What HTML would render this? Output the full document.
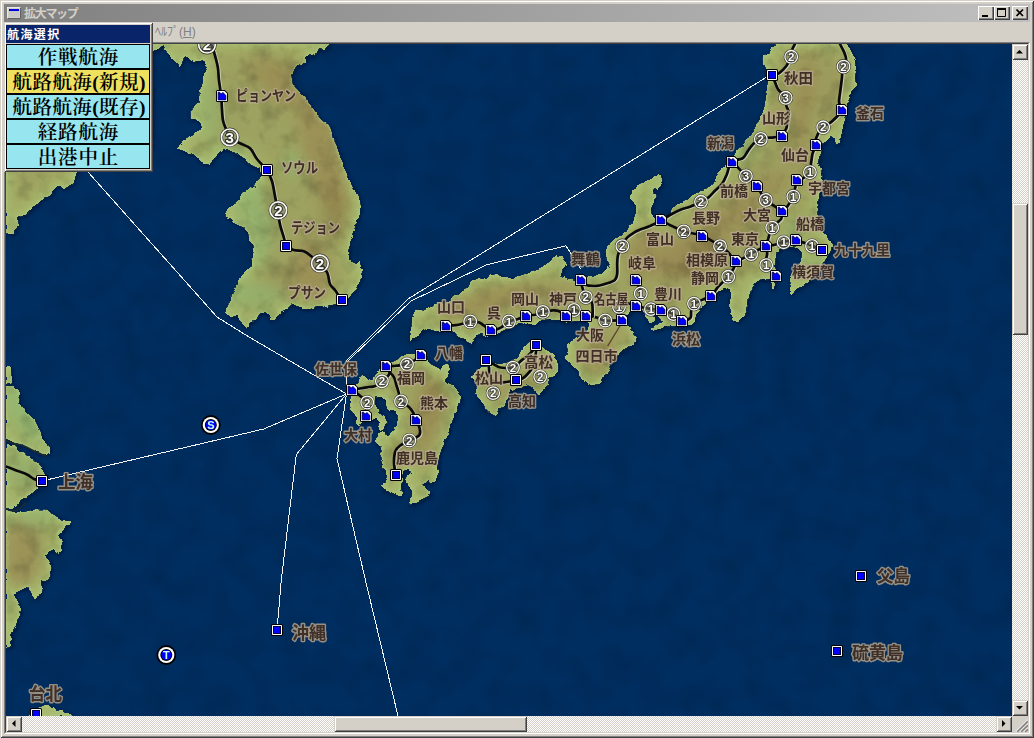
<!DOCTYPE html>
<html lang="ja">
<head>
<meta charset="utf-8">
<title>拡大マップ</title>
<style>
html,body{margin:0;padding:0;}
body{width:1034px;height:738px;overflow:hidden;background:#d4d0c8;position:relative;font-family:"Liberation Sans","Noto Sans CJK JP",sans-serif;}
.abs{position:absolute;}
#win{position:absolute;left:0;top:0;width:1034px;height:738px;box-sizing:border-box;background:#d4d0c8;
 box-shadow:inset 1px 1px 0 #d4d0c8, inset -1px -1px 0 #404040, inset 2px 2px 0 #fff, inset -2px -2px 0 #808080;}
#title{left:4px;top:4px;width:1026px;height:18px;background:linear-gradient(90deg,#808080 0%,#c0c0c0 100%);}
#title .txt{left:20px;top:1px;height:18px;line-height:18px;font-size:12px;font-weight:bold;color:#d4d0c8;letter-spacing:-1.3px;white-space:nowrap;}
.tb{position:absolute;top:6px;width:16px;height:14px;box-sizing:border-box;background:#d4d0c8;box-shadow:inset 1px 1px 0 #fff, inset -1px -1px 0 #404040, inset -2px -2px 0 #808080;}
#menubar{left:4px;top:22px;width:1026px;height:20px;background:#d4d0c8;}
#help{left:151px;top:2px;font-size:12px;line-height:16px;color:#808080;white-space:nowrap;letter-spacing:0px;}
#client{left:4px;top:42px;width:1026px;height:692px;box-sizing:border-box;border:1px solid;border-color:#808080 #fff #fff #808080;}
#client2{left:5px;top:43px;width:1024px;height:690px;box-sizing:border-box;border:1px solid;border-color:#404040 #d4d0c8 #d4d0c8 #404040;}
.track{background-color:#fff;background-image:linear-gradient(45deg,#d4d0c8 25%,transparent 25%,transparent 75%,#d4d0c8 75%),linear-gradient(45deg,#d4d0c8 25%,transparent 25%,transparent 75%,#d4d0c8 75%);background-size:2px 2px;background-position:0 0,1px 1px;}
.btn3d{position:absolute;box-sizing:border-box;background:#d4d0c8;box-shadow:inset 1px 1px 0 #d4d0c8, inset -1px -1px 0 #404040, inset 2px 2px 0 #fff, inset -2px -2px 0 #808080;}
#panel{left:4px;top:22px;width:149px;height:150px;box-sizing:border-box;background:#d4d0c8;box-shadow:inset 1px 1px 0 #d4d0c8, inset -1px -1px 0 #404040, inset 2px 2px 0 #fff, inset -2px -2px 0 #808080;}
#phead{left:2px;top:3px;width:144px;height:18px;background:#0a246a;color:#fff;font-weight:bold;font-size:12px;line-height:20px;letter-spacing:1.4px;white-space:nowrap;}
.pb{position:absolute;left:2px;width:144px;height:25px;box-sizing:border-box;border:1px solid #000;border-bottom-width:1px;background:#97e6ef;text-align:center;font-family:"Liberation Serif","Noto Serif CJK JP","Noto Serif CJK SC",serif;font-weight:600;font-size:19.5px;line-height:23px;color:#000;white-space:nowrap;overflow:hidden;}
.pb span{display:inline-block;letter-spacing:0.9px;margin-right:-0.9px;position:relative;top:1px;}
.pb span span{position:static;}
</style>
</head>
<body>
<div id="win">
 <div id="title" class="abs">
  <svg class="abs" style="left:3px;top:3px" width="14" height="12" viewBox="0 0 14 12"><rect x="0" y="0" width="14" height="12" fill="#d4d0c8"/><path d="M0 12V0H14" fill="none" stroke="#fff" stroke-width="1"/><path d="M0.5 11.5H13.5V0.5" fill="none" stroke="#606060" stroke-width="1"/><rect x="2" y="2" width="10" height="2" fill="#0000e0"/><rect x="2" y="4" width="10" height="6" fill="#c8c8c8"/></svg>
  <div class="abs txt">拡大マップ</div>
 </div>
 <div class="tb" style="left:978px"><svg width="16" height="14" class="abs" style="left:0;top:0"><rect x="4" y="9" width="6" height="2" fill="#000"/></svg></div>
 <div class="tb" style="left:994px"><svg width="16" height="14" class="abs" style="left:0;top:0"><path d="M3.5 3H11.5V10.5H3.5Z" fill="none" stroke="#000" stroke-width="1"/><rect x="3" y="2" width="9" height="2" fill="#000"/></svg></div>
 <div class="tb" style="left:1012px"><svg width="16" height="14" class="abs" style="left:0;top:0"><path d="M4.5 3.5L11 10M11 3.5L4.5 10" fill="none" stroke="#000" stroke-width="1.7"/></svg></div>
 <div id="menubar" class="abs"><div id="help" class="abs">ﾍﾙﾌﾟ(<u>H</u>)</div></div>
 <div id="client" class="abs"></div>
 <div id="client2" class="abs"></div>
 <div id="mapwrap" class="abs" style="left:6px;top:44px;width:1006px;height:672px;overflow:hidden;background:#01316a">
<svg width="1006" height="672" viewBox="6 44 1006 672" style="position:absolute;left:0;top:0;display:block">
<defs>
<filter id="noise" x="0" y="0" width="100%" height="100%"><feTurbulence type="fractalNoise" baseFrequency="0.035" numOctaves="2" seed="7" result="n"/><feColorMatrix in="n" type="matrix" values="0 0 0 0 0  0 0 0 0 0  0 0 0 0 0  0 0 0 -1.6 0.95"/></filter>
<filter id="noise2" x="0" y="0" width="100%" height="100%"><feTurbulence type="fractalNoise" baseFrequency="0.05" numOctaves="3" seed="3" result="n"/><feColorMatrix in="n" type="matrix" values="0 0 0 0 0  0 0 0 0 0  0 0 0 0 0  0 0 0 -2.2 1.2"/></filter>
<filter id="rough" x="0" y="0" width="100%" height="100%"><feTurbulence type="fractalNoise" baseFrequency="0.16" numOctaves="2" seed="11" result="t"/><feDisplacementMap in="SourceGraphic" in2="t" scale="4" xChannelSelector="R" yChannelSelector="G"/></filter>
<filter id="inner1" x="0" y="0" width="100%" height="100%"><feMorphology operator="erode" radius="3"/><feGaussianBlur stdDeviation="3"/></filter>
<filter id="inner2" x="0" y="0" width="100%" height="100%"><feMorphology operator="erode" radius="9"/><feGaussianBlur stdDeviation="6"/></filter>
<filter id="blur1" x="0" y="0" width="100%" height="100%"><feGaussianBlur stdDeviation="0.8"/></filter>
<filter id="blur8" x="-30%" y="-30%" width="160%" height="160%"><feGaussianBlur stdDeviation="7"/></filter>
<filter id="blur3" x="-30%" y="-30%" width="160%" height="160%"><feGaussianBlur stdDeviation="2.2"/></filter>
<filter id="sh" x="-10%" y="-10%" width="120%" height="120%"><feGaussianBlur stdDeviation="2"/></filter>
<clipPath id="landclip">
<polygon points="152.0,43.0 330.0,43.0 325.0,50.0 318.5,49.0 316.0,54.0 306.0,56.0 306.0,63.0 297.0,66.0 291.0,75.0 293.0,85.0 306.0,99.0 321.0,120.0 329.0,124.0 337.0,148.0 345.0,170.0 352.0,186.0 360.0,200.0 361.0,208.0 356.0,222.0 352.0,235.0 348.0,251.0 349.0,260.0 356.0,264.0 358.6,261.0 362.0,270.0 360.0,281.0 354.6,291.0 348.0,296.0 346.4,302.0 332.7,304.4 324.0,306.6 317.5,305.5 311.0,308.7 302.4,308.7 297.0,305.5 291.5,304.4 287.2,308.7 281.8,310.9 278.0,316.0 275.3,319.6 270.9,319.6 268.0,315.0 265.5,312.0 260.1,313.0 255.8,319.6 250.3,321.7 246.0,329.3 241.7,321.7 236.3,315.2 230.8,317.4 225.4,313.0 226.5,306.6 230.8,302.2 231.9,294.6 235.2,289.2 237.3,282.7 240.6,276.2 246.0,271.9 250.3,267.5 252.5,261.0 253.6,252.4 252.5,244.8 249.3,239.4 248.2,232.9 243.8,227.4 236.3,224.2 231.9,218.8 225.4,216.6 226.5,211.2 233.0,204.7 240.6,198.2 242.8,191.7 250.3,187.3 256.0,188.4 254.7,183.0 262.3,176.5 258.5,167.4 250.0,164.7 242.0,156.6 236.8,153.9 231.0,151.0 223.0,148.5 215.0,156.6 209.6,164.7 201.5,162.0 193.4,153.9 185.0,151.0 177.0,148.5 182.5,141.7 190.7,135.0 204.0,128.0 198.8,121.0 190.7,118.6 190.7,110.5 198.8,102.4 200.0,91.5 202.9,78.0 207.0,67.0 204.0,60.0 193.4,61.7 185.0,56.0 179.8,67.0 175.8,61.7 166.0,50.8 163.5,45.0 152.7,52.0"/>
<polygon points="6.0,43.0 152.0,43.0 152.0,150.0 82.0,150.0 78.0,168.0 76.5,173.0 73.0,183.0 65.0,188.5 57.0,185.8 51.5,194.0 40.7,200.7 32.5,207.5 27.0,214.0 16.0,217.0 19.0,225.0 13.5,233.0 6.0,234.5"/>
<polygon points="6.0,365.8 10.8,367.0 12.0,383.0 6.0,384.7"/>
<polygon points="6.0,386.0 13.5,386.0 20.0,393.0 19.0,402.0 27.0,413.0 35.0,421.0 40.7,432.0 42.0,440.0 50.0,447.0 50.0,452.5 46.0,455.0 35.0,451.0 24.4,445.7 16.0,443.0 6.0,440.0"/>
<polygon points="6.0,444.0 15.0,445.7 17.6,451.0 29.8,456.6 40.7,466.0 46.0,475.6 46.0,482.0 40.7,486.0 29.8,494.6 21.7,500.0 16.0,507.0 6.0,508.5"/>
<polygon points="6.0,510.0 13.5,512.0 24.4,512.0 35.0,509.5 46.0,509.5 54.0,515.0 62.0,520.0 71.0,521.7 65.0,528.5 58.0,535.0 62.0,542.0 62.0,550.0 58.0,554.0 54.0,549.0 48.8,551.5 44.7,555.6 48.8,559.6 51.5,567.8 50.0,577.0 44.7,581.0 40.7,581.0 42.0,589.5 35.0,600.0 31.0,592.0 27.0,586.8 21.7,589.5 13.5,593.5 20.0,605.7 19.0,616.6 15.0,627.0 10.8,635.6 10.8,646.0 6.0,648.0"/>
<polygon points="28.0,716.0 33.0,712.0 38.7,707.6 46.4,704.7 56.0,709.6 63.8,710.5 71.6,715.4 73.0,716.0"/>
<polygon points="350.0,392.0 352.4,386.2 356.8,384.7 359.8,383.2 359.0,378.8 362.0,375.0 365.8,377.3 368.8,380.3 373.2,379.5 375.5,375.0 377.7,372.0 380.7,369.0 386.4,363.0 392.6,362.0 397.0,360.0 401.6,355.7 407.5,354.2 413.5,354.0 421.2,352.0 425.4,359.0 431.4,364.6 437.3,367.6 440.3,369.8 443.3,366.0 447.8,364.6 450.0,369.0 447.8,375.8 444.5,380.3 447.8,383.2 453.8,385.5 456.7,390.7 461.2,395.9 459.7,402.6 456.7,410.0 453.8,417.5 451.7,422.0 450.3,426.8 447.6,433.6 444.9,440.3 442.2,447.1 439.5,453.9 438.1,460.7 436.8,467.4 438.1,474.2 435.4,481.0 431.3,483.7 427.3,481.0 423.2,483.7 425.9,489.1 430.7,491.2 428.6,495.9 423.2,498.6 417.8,501.3 411.0,504.7 410.3,501.3 411.7,495.9 412.4,490.5 409.6,486.4 406.9,482.4 404.9,478.3 408.3,475.6 411.0,472.9 409.6,468.8 402.9,471.5 402.0,476.0 402.2,481.0 400.8,487.8 402.2,494.6 397.4,495.2 390.7,491.8 383.9,489.8 380.5,485.0 385.2,482.4 388.0,478.3 385.2,471.5 382.5,464.7 380.5,458.0 381.9,451.2 380.5,446.4 376.4,443.0 375.8,437.6 379.1,433.6 383.9,430.8 386.0,436.0 389.6,435.4 393.4,431.0 397.0,425.0 397.8,417.5 396.3,411.6 391.0,409.0 389.6,411.6 386.6,407.0 386.0,400.0 381.4,396.7 374.7,397.4 374.7,404.0 379.2,410.0 379.2,413.0 384.4,416.0 386.6,422.0 385.2,428.0 380.7,431.0 377.7,428.0 379.2,423.5 377.7,419.0 373.2,418.3 371.7,420.5 366.0,422.0 362.0,421.3 359.8,425.7 356.1,423.5 357.6,419.0 354.6,414.5 350.9,410.0 350.1,402.6 350.9,396.7"/>
<polygon points="410.0,339.0 411.3,328.4 412.7,314.9 416.7,309.5 423.5,310.8 430.3,306.7 438.4,302.7 443.9,304.0 452.0,298.6 460.0,293.0 468.3,287.8 471.0,281.0 477.7,278.3 485.9,279.6 490.0,275.6 496.7,274.0 503.5,278.0 514.3,278.0 525.0,274.0 536.0,270.0 544.0,266.0 551.0,260.7 556.4,255.0 563.0,256.6 565.8,263.4 561.8,270.0 560.4,275.6 565.8,278.0 574.0,281.0 585.0,279.0 590.7,276.6 596.0,275.0 601.5,273.9 607.0,268.5 611.0,265.7 607.0,260.0 605.6,252.0 608.0,245.0 613.7,240.0 618.0,237.5 627.0,230.4 634.0,220.0 636.6,211.0 634.8,204.0 630.4,198.7 632.2,191.7 637.5,186.4 646.3,181.0 653.3,176.7 660.4,175.0 662.2,179.4 660.4,186.4 657.5,190.0 654.0,189.0 652.5,193.0 656.0,195.0 653.3,202.3 650.7,209.3 651.6,214.6 656.0,218.0 661.3,220.8 669.2,218.0 671.8,209.3 676.2,205.0 683.3,202.3 690.3,197.9 697.4,192.6 704.4,190.0 709.7,186.4 715.0,181.0 716.7,175.9 720.3,170.6 723.8,167.0 727.3,163.5 731.0,160.0 734.0,153.9 742.4,145.7 750.5,134.9 757.3,124.0 762.7,113.0 765.4,102.4 766.8,91.5 768.0,80.7 766.8,69.8 761.3,59.0 764.0,55.0 769.5,53.6 772.0,48.0 776.0,43.0 844.0,43.0 849.5,48.0 853.5,56.0 856.0,67.0 855.0,78.0 856.0,86.0 851.0,91.5 849.5,98.0 846.7,105.0 846.0,112.0 845.4,118.6 842.7,126.8 841.0,135.0 840.0,143.0 836.0,144.4 834.5,137.6 830.5,136.0 826.4,140.0 822.3,144.4 819.6,153.9 818.0,162.0 821.0,170.0 822.4,176.0 821.0,186.0 819.6,192.5 817.0,208.8 818.0,222.0 823.7,233.0 830.5,241.0 832.0,246.8 830.0,252.0 827.8,255.0 823.7,263.0 818.0,271.0 813.0,276.6 807.4,282.0 802.0,286.0 796.6,288.8 792.5,294.0 789.8,292.9 791.0,284.7 790.0,279.0 793.0,273.0 798.0,267.0 801.0,261.0 802.0,254.0 799.0,249.0 793.0,247.0 786.0,246.0 780.0,248.0 776.5,252.0 775.5,258.0 775.0,266.0 776.0,274.0 775.0,282.0 773.5,290.0 770.8,287.4 770.8,280.7 766.8,279.0 761.3,279.0 756.0,282.0 751.9,287.4 749.0,295.6 747.8,303.7 746.4,311.8 742.4,317.0 738.3,321.0 734.0,320.0 731.5,314.6 730.0,306.0 730.0,298.0 731.5,290.0 726.0,287.4 720.7,290.0 714.0,294.0 707.0,301.0 701.7,307.8 696.3,314.6 693.6,322.7 688.0,325.0 681.5,326.0 676.2,326.0 665.7,326.5 658.0,329.5 653.3,330.6 650.7,328.6 655.0,325.5 662.1,321.8 659.0,317.0 654.5,314.8 651.8,314.0 654.8,318.5 651.6,323.5 647.5,320.5 644.5,314.0 642.5,310.5 638.0,309.5 633.0,310.0 629.6,311.5 626.5,315.0 625.0,319.0 627.0,325.0 632.2,332.0 636.6,337.4 634.0,344.5 627.0,347.5 620.0,352.5 614.0,359.3 610.0,367.4 604.7,375.6 600.6,383.7 592.5,385.0 584.4,381.0 580.0,375.6 576.0,368.8 569.5,363.4 565.4,358.0 568.0,351.0 566.8,344.4 573.5,340.0 579.0,337.6 587.0,332.0 589.8,323.0 586.0,320.0 575.0,321.0 568.0,322.0 560.4,320.0 549.6,319.0 541.4,320.0 536.0,324.0 527.9,324.0 519.8,321.7 514.3,325.7 506.0,328.4 498.0,333.9 487.2,336.6 481.8,333.9 476.4,335.0 471.0,344.7 465.5,339.0 457.4,336.6 452.0,329.8 443.8,331.0 435.7,331.0 427.6,328.4 422.0,331.0 416.7,336.6 411.3,340.6"/>
<polygon points="481.3,367.4 489.5,366.0 494.9,363.4 503.0,364.7 508.5,362.0 516.6,359.3 520.7,353.9 523.4,347.0 530.0,343.0 535.6,341.7 542.4,347.0 547.8,351.0 554.6,355.0 557.3,362.0 558.6,370.0 554.6,375.6 549.0,378.0 547.8,385.0 542.4,391.8 538.3,396.0 534.0,387.8 527.4,385.0 519.3,387.8 511.0,390.5 508.5,397.0 504.4,405.0 499.0,409.5 495.0,416.0 489.5,413.5 484.0,408.0 481.3,401.0 477.3,397.0 476.0,390.5 478.6,383.7 474.6,379.6 470.5,377.0 476.0,373.0"/>
</clipPath>
<g id="mk"><rect x="-6" y="-6" width="12" height="12" rx="1.6" fill="#000"/><rect x="-5" y="-5" width="10" height="10" rx="0.8" fill="#fff"/><rect x="-3.5" y="-3.5" width="7" height="7" fill="#0000ff" stroke="#000040" stroke-width="1"/></g>
<g id="mp"><path d="M-6 -4.5Q-6 -6 -4.5 -6H2.8L6 -2.8V4.5Q6 6 4.5 6H-4.5Q-6 6 -6 4.5Z" fill="#000"/><path d="M-5 -5H2.4L5 -2.4V5H-5Z" fill="#fff"/><path d="M-3.8 -3.8H-2.4L-1.4 -2.2H-0.2L0.4 -3.2H1.2L3.8 -0.6V3.8H-3.8Z" fill="#0000ff" stroke="#000040" stroke-width="0.9" stroke-linejoin="round"/><path d="M-3.4 3.3H3.4" stroke="#0000b0" stroke-width="1"/></g>
</defs>
<rect x="6" y="44" width="1006" height="672" fill="#002e60"/>
<rect x="6" y="44" width="1006" height="672" fill="#001c40" filter="url(#noise)" opacity="0.15"/>
<g filter="url(#rough)">
<g transform="translate(1,1.5)" filter="url(#sh)" opacity="0.75">
<polygon points="152.0,43.0 330.0,43.0 325.0,50.0 318.5,49.0 316.0,54.0 306.0,56.0 306.0,63.0 297.0,66.0 291.0,75.0 293.0,85.0 306.0,99.0 321.0,120.0 329.0,124.0 337.0,148.0 345.0,170.0 352.0,186.0 360.0,200.0 361.0,208.0 356.0,222.0 352.0,235.0 348.0,251.0 349.0,260.0 356.0,264.0 358.6,261.0 362.0,270.0 360.0,281.0 354.6,291.0 348.0,296.0 346.4,302.0 332.7,304.4 324.0,306.6 317.5,305.5 311.0,308.7 302.4,308.7 297.0,305.5 291.5,304.4 287.2,308.7 281.8,310.9 278.0,316.0 275.3,319.6 270.9,319.6 268.0,315.0 265.5,312.0 260.1,313.0 255.8,319.6 250.3,321.7 246.0,329.3 241.7,321.7 236.3,315.2 230.8,317.4 225.4,313.0 226.5,306.6 230.8,302.2 231.9,294.6 235.2,289.2 237.3,282.7 240.6,276.2 246.0,271.9 250.3,267.5 252.5,261.0 253.6,252.4 252.5,244.8 249.3,239.4 248.2,232.9 243.8,227.4 236.3,224.2 231.9,218.8 225.4,216.6 226.5,211.2 233.0,204.7 240.6,198.2 242.8,191.7 250.3,187.3 256.0,188.4 254.7,183.0 262.3,176.5 258.5,167.4 250.0,164.7 242.0,156.6 236.8,153.9 231.0,151.0 223.0,148.5 215.0,156.6 209.6,164.7 201.5,162.0 193.4,153.9 185.0,151.0 177.0,148.5 182.5,141.7 190.7,135.0 204.0,128.0 198.8,121.0 190.7,118.6 190.7,110.5 198.8,102.4 200.0,91.5 202.9,78.0 207.0,67.0 204.0,60.0 193.4,61.7 185.0,56.0 179.8,67.0 175.8,61.7 166.0,50.8 163.5,45.0 152.7,52.0" fill="#000c28"/>
<polygon points="6.0,43.0 152.0,43.0 152.0,150.0 82.0,150.0 78.0,168.0 76.5,173.0 73.0,183.0 65.0,188.5 57.0,185.8 51.5,194.0 40.7,200.7 32.5,207.5 27.0,214.0 16.0,217.0 19.0,225.0 13.5,233.0 6.0,234.5" fill="#000c28"/>
<polygon points="6.0,365.8 10.8,367.0 12.0,383.0 6.0,384.7" fill="#000c28"/>
<polygon points="6.0,386.0 13.5,386.0 20.0,393.0 19.0,402.0 27.0,413.0 35.0,421.0 40.7,432.0 42.0,440.0 50.0,447.0 50.0,452.5 46.0,455.0 35.0,451.0 24.4,445.7 16.0,443.0 6.0,440.0" fill="#000c28"/>
<polygon points="6.0,444.0 15.0,445.7 17.6,451.0 29.8,456.6 40.7,466.0 46.0,475.6 46.0,482.0 40.7,486.0 29.8,494.6 21.7,500.0 16.0,507.0 6.0,508.5" fill="#000c28"/>
<polygon points="6.0,510.0 13.5,512.0 24.4,512.0 35.0,509.5 46.0,509.5 54.0,515.0 62.0,520.0 71.0,521.7 65.0,528.5 58.0,535.0 62.0,542.0 62.0,550.0 58.0,554.0 54.0,549.0 48.8,551.5 44.7,555.6 48.8,559.6 51.5,567.8 50.0,577.0 44.7,581.0 40.7,581.0 42.0,589.5 35.0,600.0 31.0,592.0 27.0,586.8 21.7,589.5 13.5,593.5 20.0,605.7 19.0,616.6 15.0,627.0 10.8,635.6 10.8,646.0 6.0,648.0" fill="#000c28"/>
<polygon points="28.0,716.0 33.0,712.0 38.7,707.6 46.4,704.7 56.0,709.6 63.8,710.5 71.6,715.4 73.0,716.0" fill="#000c28"/>
<polygon points="350.0,392.0 352.4,386.2 356.8,384.7 359.8,383.2 359.0,378.8 362.0,375.0 365.8,377.3 368.8,380.3 373.2,379.5 375.5,375.0 377.7,372.0 380.7,369.0 386.4,363.0 392.6,362.0 397.0,360.0 401.6,355.7 407.5,354.2 413.5,354.0 421.2,352.0 425.4,359.0 431.4,364.6 437.3,367.6 440.3,369.8 443.3,366.0 447.8,364.6 450.0,369.0 447.8,375.8 444.5,380.3 447.8,383.2 453.8,385.5 456.7,390.7 461.2,395.9 459.7,402.6 456.7,410.0 453.8,417.5 451.7,422.0 450.3,426.8 447.6,433.6 444.9,440.3 442.2,447.1 439.5,453.9 438.1,460.7 436.8,467.4 438.1,474.2 435.4,481.0 431.3,483.7 427.3,481.0 423.2,483.7 425.9,489.1 430.7,491.2 428.6,495.9 423.2,498.6 417.8,501.3 411.0,504.7 410.3,501.3 411.7,495.9 412.4,490.5 409.6,486.4 406.9,482.4 404.9,478.3 408.3,475.6 411.0,472.9 409.6,468.8 402.9,471.5 402.0,476.0 402.2,481.0 400.8,487.8 402.2,494.6 397.4,495.2 390.7,491.8 383.9,489.8 380.5,485.0 385.2,482.4 388.0,478.3 385.2,471.5 382.5,464.7 380.5,458.0 381.9,451.2 380.5,446.4 376.4,443.0 375.8,437.6 379.1,433.6 383.9,430.8 386.0,436.0 389.6,435.4 393.4,431.0 397.0,425.0 397.8,417.5 396.3,411.6 391.0,409.0 389.6,411.6 386.6,407.0 386.0,400.0 381.4,396.7 374.7,397.4 374.7,404.0 379.2,410.0 379.2,413.0 384.4,416.0 386.6,422.0 385.2,428.0 380.7,431.0 377.7,428.0 379.2,423.5 377.7,419.0 373.2,418.3 371.7,420.5 366.0,422.0 362.0,421.3 359.8,425.7 356.1,423.5 357.6,419.0 354.6,414.5 350.9,410.0 350.1,402.6 350.9,396.7" fill="#000c28"/>
<polygon points="410.0,339.0 411.3,328.4 412.7,314.9 416.7,309.5 423.5,310.8 430.3,306.7 438.4,302.7 443.9,304.0 452.0,298.6 460.0,293.0 468.3,287.8 471.0,281.0 477.7,278.3 485.9,279.6 490.0,275.6 496.7,274.0 503.5,278.0 514.3,278.0 525.0,274.0 536.0,270.0 544.0,266.0 551.0,260.7 556.4,255.0 563.0,256.6 565.8,263.4 561.8,270.0 560.4,275.6 565.8,278.0 574.0,281.0 585.0,279.0 590.7,276.6 596.0,275.0 601.5,273.9 607.0,268.5 611.0,265.7 607.0,260.0 605.6,252.0 608.0,245.0 613.7,240.0 618.0,237.5 627.0,230.4 634.0,220.0 636.6,211.0 634.8,204.0 630.4,198.7 632.2,191.7 637.5,186.4 646.3,181.0 653.3,176.7 660.4,175.0 662.2,179.4 660.4,186.4 657.5,190.0 654.0,189.0 652.5,193.0 656.0,195.0 653.3,202.3 650.7,209.3 651.6,214.6 656.0,218.0 661.3,220.8 669.2,218.0 671.8,209.3 676.2,205.0 683.3,202.3 690.3,197.9 697.4,192.6 704.4,190.0 709.7,186.4 715.0,181.0 716.7,175.9 720.3,170.6 723.8,167.0 727.3,163.5 731.0,160.0 734.0,153.9 742.4,145.7 750.5,134.9 757.3,124.0 762.7,113.0 765.4,102.4 766.8,91.5 768.0,80.7 766.8,69.8 761.3,59.0 764.0,55.0 769.5,53.6 772.0,48.0 776.0,43.0 844.0,43.0 849.5,48.0 853.5,56.0 856.0,67.0 855.0,78.0 856.0,86.0 851.0,91.5 849.5,98.0 846.7,105.0 846.0,112.0 845.4,118.6 842.7,126.8 841.0,135.0 840.0,143.0 836.0,144.4 834.5,137.6 830.5,136.0 826.4,140.0 822.3,144.4 819.6,153.9 818.0,162.0 821.0,170.0 822.4,176.0 821.0,186.0 819.6,192.5 817.0,208.8 818.0,222.0 823.7,233.0 830.5,241.0 832.0,246.8 830.0,252.0 827.8,255.0 823.7,263.0 818.0,271.0 813.0,276.6 807.4,282.0 802.0,286.0 796.6,288.8 792.5,294.0 789.8,292.9 791.0,284.7 790.0,279.0 793.0,273.0 798.0,267.0 801.0,261.0 802.0,254.0 799.0,249.0 793.0,247.0 786.0,246.0 780.0,248.0 776.5,252.0 775.5,258.0 775.0,266.0 776.0,274.0 775.0,282.0 773.5,290.0 770.8,287.4 770.8,280.7 766.8,279.0 761.3,279.0 756.0,282.0 751.9,287.4 749.0,295.6 747.8,303.7 746.4,311.8 742.4,317.0 738.3,321.0 734.0,320.0 731.5,314.6 730.0,306.0 730.0,298.0 731.5,290.0 726.0,287.4 720.7,290.0 714.0,294.0 707.0,301.0 701.7,307.8 696.3,314.6 693.6,322.7 688.0,325.0 681.5,326.0 676.2,326.0 665.7,326.5 658.0,329.5 653.3,330.6 650.7,328.6 655.0,325.5 662.1,321.8 659.0,317.0 654.5,314.8 651.8,314.0 654.8,318.5 651.6,323.5 647.5,320.5 644.5,314.0 642.5,310.5 638.0,309.5 633.0,310.0 629.6,311.5 626.5,315.0 625.0,319.0 627.0,325.0 632.2,332.0 636.6,337.4 634.0,344.5 627.0,347.5 620.0,352.5 614.0,359.3 610.0,367.4 604.7,375.6 600.6,383.7 592.5,385.0 584.4,381.0 580.0,375.6 576.0,368.8 569.5,363.4 565.4,358.0 568.0,351.0 566.8,344.4 573.5,340.0 579.0,337.6 587.0,332.0 589.8,323.0 586.0,320.0 575.0,321.0 568.0,322.0 560.4,320.0 549.6,319.0 541.4,320.0 536.0,324.0 527.9,324.0 519.8,321.7 514.3,325.7 506.0,328.4 498.0,333.9 487.2,336.6 481.8,333.9 476.4,335.0 471.0,344.7 465.5,339.0 457.4,336.6 452.0,329.8 443.8,331.0 435.7,331.0 427.6,328.4 422.0,331.0 416.7,336.6 411.3,340.6" fill="#000c28"/>
<polygon points="481.3,367.4 489.5,366.0 494.9,363.4 503.0,364.7 508.5,362.0 516.6,359.3 520.7,353.9 523.4,347.0 530.0,343.0 535.6,341.7 542.4,347.0 547.8,351.0 554.6,355.0 557.3,362.0 558.6,370.0 554.6,375.6 549.0,378.0 547.8,385.0 542.4,391.8 538.3,396.0 534.0,387.8 527.4,385.0 519.3,387.8 511.0,390.5 508.5,397.0 504.4,405.0 499.0,409.5 495.0,416.0 489.5,413.5 484.0,408.0 481.3,401.0 477.3,397.0 476.0,390.5 478.6,383.7 474.6,379.6 470.5,377.0 476.0,373.0" fill="#000c28"/>
</g>
<g>
<polygon points="152.0,43.0 330.0,43.0 325.0,50.0 318.5,49.0 316.0,54.0 306.0,56.0 306.0,63.0 297.0,66.0 291.0,75.0 293.0,85.0 306.0,99.0 321.0,120.0 329.0,124.0 337.0,148.0 345.0,170.0 352.0,186.0 360.0,200.0 361.0,208.0 356.0,222.0 352.0,235.0 348.0,251.0 349.0,260.0 356.0,264.0 358.6,261.0 362.0,270.0 360.0,281.0 354.6,291.0 348.0,296.0 346.4,302.0 332.7,304.4 324.0,306.6 317.5,305.5 311.0,308.7 302.4,308.7 297.0,305.5 291.5,304.4 287.2,308.7 281.8,310.9 278.0,316.0 275.3,319.6 270.9,319.6 268.0,315.0 265.5,312.0 260.1,313.0 255.8,319.6 250.3,321.7 246.0,329.3 241.7,321.7 236.3,315.2 230.8,317.4 225.4,313.0 226.5,306.6 230.8,302.2 231.9,294.6 235.2,289.2 237.3,282.7 240.6,276.2 246.0,271.9 250.3,267.5 252.5,261.0 253.6,252.4 252.5,244.8 249.3,239.4 248.2,232.9 243.8,227.4 236.3,224.2 231.9,218.8 225.4,216.6 226.5,211.2 233.0,204.7 240.6,198.2 242.8,191.7 250.3,187.3 256.0,188.4 254.7,183.0 262.3,176.5 258.5,167.4 250.0,164.7 242.0,156.6 236.8,153.9 231.0,151.0 223.0,148.5 215.0,156.6 209.6,164.7 201.5,162.0 193.4,153.9 185.0,151.0 177.0,148.5 182.5,141.7 190.7,135.0 204.0,128.0 198.8,121.0 190.7,118.6 190.7,110.5 198.8,102.4 200.0,91.5 202.9,78.0 207.0,67.0 204.0,60.0 193.4,61.7 185.0,56.0 179.8,67.0 175.8,61.7 166.0,50.8 163.5,45.0 152.7,52.0" fill="#a8bd72" shape-rendering="crispEdges"/>
<polygon points="6.0,43.0 152.0,43.0 152.0,150.0 82.0,150.0 78.0,168.0 76.5,173.0 73.0,183.0 65.0,188.5 57.0,185.8 51.5,194.0 40.7,200.7 32.5,207.5 27.0,214.0 16.0,217.0 19.0,225.0 13.5,233.0 6.0,234.5" fill="#a8bd72" shape-rendering="crispEdges"/>
<polygon points="6.0,365.8 10.8,367.0 12.0,383.0 6.0,384.7" fill="#a8bd72" shape-rendering="crispEdges"/>
<polygon points="6.0,386.0 13.5,386.0 20.0,393.0 19.0,402.0 27.0,413.0 35.0,421.0 40.7,432.0 42.0,440.0 50.0,447.0 50.0,452.5 46.0,455.0 35.0,451.0 24.4,445.7 16.0,443.0 6.0,440.0" fill="#a8bd72" shape-rendering="crispEdges"/>
<polygon points="6.0,444.0 15.0,445.7 17.6,451.0 29.8,456.6 40.7,466.0 46.0,475.6 46.0,482.0 40.7,486.0 29.8,494.6 21.7,500.0 16.0,507.0 6.0,508.5" fill="#a8bd72" shape-rendering="crispEdges"/>
<polygon points="6.0,510.0 13.5,512.0 24.4,512.0 35.0,509.5 46.0,509.5 54.0,515.0 62.0,520.0 71.0,521.7 65.0,528.5 58.0,535.0 62.0,542.0 62.0,550.0 58.0,554.0 54.0,549.0 48.8,551.5 44.7,555.6 48.8,559.6 51.5,567.8 50.0,577.0 44.7,581.0 40.7,581.0 42.0,589.5 35.0,600.0 31.0,592.0 27.0,586.8 21.7,589.5 13.5,593.5 20.0,605.7 19.0,616.6 15.0,627.0 10.8,635.6 10.8,646.0 6.0,648.0" fill="#a8bd72" shape-rendering="crispEdges"/>
<polygon points="28.0,716.0 33.0,712.0 38.7,707.6 46.4,704.7 56.0,709.6 63.8,710.5 71.6,715.4 73.0,716.0" fill="#a8bd72" shape-rendering="crispEdges"/>
<polygon points="350.0,392.0 352.4,386.2 356.8,384.7 359.8,383.2 359.0,378.8 362.0,375.0 365.8,377.3 368.8,380.3 373.2,379.5 375.5,375.0 377.7,372.0 380.7,369.0 386.4,363.0 392.6,362.0 397.0,360.0 401.6,355.7 407.5,354.2 413.5,354.0 421.2,352.0 425.4,359.0 431.4,364.6 437.3,367.6 440.3,369.8 443.3,366.0 447.8,364.6 450.0,369.0 447.8,375.8 444.5,380.3 447.8,383.2 453.8,385.5 456.7,390.7 461.2,395.9 459.7,402.6 456.7,410.0 453.8,417.5 451.7,422.0 450.3,426.8 447.6,433.6 444.9,440.3 442.2,447.1 439.5,453.9 438.1,460.7 436.8,467.4 438.1,474.2 435.4,481.0 431.3,483.7 427.3,481.0 423.2,483.7 425.9,489.1 430.7,491.2 428.6,495.9 423.2,498.6 417.8,501.3 411.0,504.7 410.3,501.3 411.7,495.9 412.4,490.5 409.6,486.4 406.9,482.4 404.9,478.3 408.3,475.6 411.0,472.9 409.6,468.8 402.9,471.5 402.0,476.0 402.2,481.0 400.8,487.8 402.2,494.6 397.4,495.2 390.7,491.8 383.9,489.8 380.5,485.0 385.2,482.4 388.0,478.3 385.2,471.5 382.5,464.7 380.5,458.0 381.9,451.2 380.5,446.4 376.4,443.0 375.8,437.6 379.1,433.6 383.9,430.8 386.0,436.0 389.6,435.4 393.4,431.0 397.0,425.0 397.8,417.5 396.3,411.6 391.0,409.0 389.6,411.6 386.6,407.0 386.0,400.0 381.4,396.7 374.7,397.4 374.7,404.0 379.2,410.0 379.2,413.0 384.4,416.0 386.6,422.0 385.2,428.0 380.7,431.0 377.7,428.0 379.2,423.5 377.7,419.0 373.2,418.3 371.7,420.5 366.0,422.0 362.0,421.3 359.8,425.7 356.1,423.5 357.6,419.0 354.6,414.5 350.9,410.0 350.1,402.6 350.9,396.7" fill="#a8bd72" shape-rendering="crispEdges"/>
<polygon points="410.0,339.0 411.3,328.4 412.7,314.9 416.7,309.5 423.5,310.8 430.3,306.7 438.4,302.7 443.9,304.0 452.0,298.6 460.0,293.0 468.3,287.8 471.0,281.0 477.7,278.3 485.9,279.6 490.0,275.6 496.7,274.0 503.5,278.0 514.3,278.0 525.0,274.0 536.0,270.0 544.0,266.0 551.0,260.7 556.4,255.0 563.0,256.6 565.8,263.4 561.8,270.0 560.4,275.6 565.8,278.0 574.0,281.0 585.0,279.0 590.7,276.6 596.0,275.0 601.5,273.9 607.0,268.5 611.0,265.7 607.0,260.0 605.6,252.0 608.0,245.0 613.7,240.0 618.0,237.5 627.0,230.4 634.0,220.0 636.6,211.0 634.8,204.0 630.4,198.7 632.2,191.7 637.5,186.4 646.3,181.0 653.3,176.7 660.4,175.0 662.2,179.4 660.4,186.4 657.5,190.0 654.0,189.0 652.5,193.0 656.0,195.0 653.3,202.3 650.7,209.3 651.6,214.6 656.0,218.0 661.3,220.8 669.2,218.0 671.8,209.3 676.2,205.0 683.3,202.3 690.3,197.9 697.4,192.6 704.4,190.0 709.7,186.4 715.0,181.0 716.7,175.9 720.3,170.6 723.8,167.0 727.3,163.5 731.0,160.0 734.0,153.9 742.4,145.7 750.5,134.9 757.3,124.0 762.7,113.0 765.4,102.4 766.8,91.5 768.0,80.7 766.8,69.8 761.3,59.0 764.0,55.0 769.5,53.6 772.0,48.0 776.0,43.0 844.0,43.0 849.5,48.0 853.5,56.0 856.0,67.0 855.0,78.0 856.0,86.0 851.0,91.5 849.5,98.0 846.7,105.0 846.0,112.0 845.4,118.6 842.7,126.8 841.0,135.0 840.0,143.0 836.0,144.4 834.5,137.6 830.5,136.0 826.4,140.0 822.3,144.4 819.6,153.9 818.0,162.0 821.0,170.0 822.4,176.0 821.0,186.0 819.6,192.5 817.0,208.8 818.0,222.0 823.7,233.0 830.5,241.0 832.0,246.8 830.0,252.0 827.8,255.0 823.7,263.0 818.0,271.0 813.0,276.6 807.4,282.0 802.0,286.0 796.6,288.8 792.5,294.0 789.8,292.9 791.0,284.7 790.0,279.0 793.0,273.0 798.0,267.0 801.0,261.0 802.0,254.0 799.0,249.0 793.0,247.0 786.0,246.0 780.0,248.0 776.5,252.0 775.5,258.0 775.0,266.0 776.0,274.0 775.0,282.0 773.5,290.0 770.8,287.4 770.8,280.7 766.8,279.0 761.3,279.0 756.0,282.0 751.9,287.4 749.0,295.6 747.8,303.7 746.4,311.8 742.4,317.0 738.3,321.0 734.0,320.0 731.5,314.6 730.0,306.0 730.0,298.0 731.5,290.0 726.0,287.4 720.7,290.0 714.0,294.0 707.0,301.0 701.7,307.8 696.3,314.6 693.6,322.7 688.0,325.0 681.5,326.0 676.2,326.0 665.7,326.5 658.0,329.5 653.3,330.6 650.7,328.6 655.0,325.5 662.1,321.8 659.0,317.0 654.5,314.8 651.8,314.0 654.8,318.5 651.6,323.5 647.5,320.5 644.5,314.0 642.5,310.5 638.0,309.5 633.0,310.0 629.6,311.5 626.5,315.0 625.0,319.0 627.0,325.0 632.2,332.0 636.6,337.4 634.0,344.5 627.0,347.5 620.0,352.5 614.0,359.3 610.0,367.4 604.7,375.6 600.6,383.7 592.5,385.0 584.4,381.0 580.0,375.6 576.0,368.8 569.5,363.4 565.4,358.0 568.0,351.0 566.8,344.4 573.5,340.0 579.0,337.6 587.0,332.0 589.8,323.0 586.0,320.0 575.0,321.0 568.0,322.0 560.4,320.0 549.6,319.0 541.4,320.0 536.0,324.0 527.9,324.0 519.8,321.7 514.3,325.7 506.0,328.4 498.0,333.9 487.2,336.6 481.8,333.9 476.4,335.0 471.0,344.7 465.5,339.0 457.4,336.6 452.0,329.8 443.8,331.0 435.7,331.0 427.6,328.4 422.0,331.0 416.7,336.6 411.3,340.6" fill="#a8bd72" shape-rendering="crispEdges"/>
<polygon points="481.3,367.4 489.5,366.0 494.9,363.4 503.0,364.7 508.5,362.0 516.6,359.3 520.7,353.9 523.4,347.0 530.0,343.0 535.6,341.7 542.4,347.0 547.8,351.0 554.6,355.0 557.3,362.0 558.6,370.0 554.6,375.6 549.0,378.0 547.8,385.0 542.4,391.8 538.3,396.0 534.0,387.8 527.4,385.0 519.3,387.8 511.0,390.5 508.5,397.0 504.4,405.0 499.0,409.5 495.0,416.0 489.5,413.5 484.0,408.0 481.3,401.0 477.3,397.0 476.0,390.5 478.6,383.7 474.6,379.6 470.5,377.0 476.0,373.0" fill="#a8bd72" shape-rendering="crispEdges"/>
</g>
<g clip-path="url(#landclip)">
<g filter="url(#inner1)">
<polygon points="152.0,43.0 330.0,43.0 325.0,50.0 318.5,49.0 316.0,54.0 306.0,56.0 306.0,63.0 297.0,66.0 291.0,75.0 293.0,85.0 306.0,99.0 321.0,120.0 329.0,124.0 337.0,148.0 345.0,170.0 352.0,186.0 360.0,200.0 361.0,208.0 356.0,222.0 352.0,235.0 348.0,251.0 349.0,260.0 356.0,264.0 358.6,261.0 362.0,270.0 360.0,281.0 354.6,291.0 348.0,296.0 346.4,302.0 332.7,304.4 324.0,306.6 317.5,305.5 311.0,308.7 302.4,308.7 297.0,305.5 291.5,304.4 287.2,308.7 281.8,310.9 278.0,316.0 275.3,319.6 270.9,319.6 268.0,315.0 265.5,312.0 260.1,313.0 255.8,319.6 250.3,321.7 246.0,329.3 241.7,321.7 236.3,315.2 230.8,317.4 225.4,313.0 226.5,306.6 230.8,302.2 231.9,294.6 235.2,289.2 237.3,282.7 240.6,276.2 246.0,271.9 250.3,267.5 252.5,261.0 253.6,252.4 252.5,244.8 249.3,239.4 248.2,232.9 243.8,227.4 236.3,224.2 231.9,218.8 225.4,216.6 226.5,211.2 233.0,204.7 240.6,198.2 242.8,191.7 250.3,187.3 256.0,188.4 254.7,183.0 262.3,176.5 258.5,167.4 250.0,164.7 242.0,156.6 236.8,153.9 231.0,151.0 223.0,148.5 215.0,156.6 209.6,164.7 201.5,162.0 193.4,153.9 185.0,151.0 177.0,148.5 182.5,141.7 190.7,135.0 204.0,128.0 198.8,121.0 190.7,118.6 190.7,110.5 198.8,102.4 200.0,91.5 202.9,78.0 207.0,67.0 204.0,60.0 193.4,61.7 185.0,56.0 179.8,67.0 175.8,61.7 166.0,50.8 163.5,45.0 152.7,52.0" fill="#a4b066"/>
<polygon points="6.0,43.0 152.0,43.0 152.0,150.0 82.0,150.0 78.0,168.0 76.5,173.0 73.0,183.0 65.0,188.5 57.0,185.8 51.5,194.0 40.7,200.7 32.5,207.5 27.0,214.0 16.0,217.0 19.0,225.0 13.5,233.0 6.0,234.5" fill="#a4b066"/>
<polygon points="6.0,365.8 10.8,367.0 12.0,383.0 6.0,384.7" fill="#a4b066"/>
<polygon points="6.0,386.0 13.5,386.0 20.0,393.0 19.0,402.0 27.0,413.0 35.0,421.0 40.7,432.0 42.0,440.0 50.0,447.0 50.0,452.5 46.0,455.0 35.0,451.0 24.4,445.7 16.0,443.0 6.0,440.0" fill="#a4b066"/>
<polygon points="6.0,444.0 15.0,445.7 17.6,451.0 29.8,456.6 40.7,466.0 46.0,475.6 46.0,482.0 40.7,486.0 29.8,494.6 21.7,500.0 16.0,507.0 6.0,508.5" fill="#a4b066"/>
<polygon points="6.0,510.0 13.5,512.0 24.4,512.0 35.0,509.5 46.0,509.5 54.0,515.0 62.0,520.0 71.0,521.7 65.0,528.5 58.0,535.0 62.0,542.0 62.0,550.0 58.0,554.0 54.0,549.0 48.8,551.5 44.7,555.6 48.8,559.6 51.5,567.8 50.0,577.0 44.7,581.0 40.7,581.0 42.0,589.5 35.0,600.0 31.0,592.0 27.0,586.8 21.7,589.5 13.5,593.5 20.0,605.7 19.0,616.6 15.0,627.0 10.8,635.6 10.8,646.0 6.0,648.0" fill="#a4b066"/>
<polygon points="28.0,716.0 33.0,712.0 38.7,707.6 46.4,704.7 56.0,709.6 63.8,710.5 71.6,715.4 73.0,716.0" fill="#a4b066"/>
<polygon points="350.0,392.0 352.4,386.2 356.8,384.7 359.8,383.2 359.0,378.8 362.0,375.0 365.8,377.3 368.8,380.3 373.2,379.5 375.5,375.0 377.7,372.0 380.7,369.0 386.4,363.0 392.6,362.0 397.0,360.0 401.6,355.7 407.5,354.2 413.5,354.0 421.2,352.0 425.4,359.0 431.4,364.6 437.3,367.6 440.3,369.8 443.3,366.0 447.8,364.6 450.0,369.0 447.8,375.8 444.5,380.3 447.8,383.2 453.8,385.5 456.7,390.7 461.2,395.9 459.7,402.6 456.7,410.0 453.8,417.5 451.7,422.0 450.3,426.8 447.6,433.6 444.9,440.3 442.2,447.1 439.5,453.9 438.1,460.7 436.8,467.4 438.1,474.2 435.4,481.0 431.3,483.7 427.3,481.0 423.2,483.7 425.9,489.1 430.7,491.2 428.6,495.9 423.2,498.6 417.8,501.3 411.0,504.7 410.3,501.3 411.7,495.9 412.4,490.5 409.6,486.4 406.9,482.4 404.9,478.3 408.3,475.6 411.0,472.9 409.6,468.8 402.9,471.5 402.0,476.0 402.2,481.0 400.8,487.8 402.2,494.6 397.4,495.2 390.7,491.8 383.9,489.8 380.5,485.0 385.2,482.4 388.0,478.3 385.2,471.5 382.5,464.7 380.5,458.0 381.9,451.2 380.5,446.4 376.4,443.0 375.8,437.6 379.1,433.6 383.9,430.8 386.0,436.0 389.6,435.4 393.4,431.0 397.0,425.0 397.8,417.5 396.3,411.6 391.0,409.0 389.6,411.6 386.6,407.0 386.0,400.0 381.4,396.7 374.7,397.4 374.7,404.0 379.2,410.0 379.2,413.0 384.4,416.0 386.6,422.0 385.2,428.0 380.7,431.0 377.7,428.0 379.2,423.5 377.7,419.0 373.2,418.3 371.7,420.5 366.0,422.0 362.0,421.3 359.8,425.7 356.1,423.5 357.6,419.0 354.6,414.5 350.9,410.0 350.1,402.6 350.9,396.7" fill="#a4b066"/>
<polygon points="410.0,339.0 411.3,328.4 412.7,314.9 416.7,309.5 423.5,310.8 430.3,306.7 438.4,302.7 443.9,304.0 452.0,298.6 460.0,293.0 468.3,287.8 471.0,281.0 477.7,278.3 485.9,279.6 490.0,275.6 496.7,274.0 503.5,278.0 514.3,278.0 525.0,274.0 536.0,270.0 544.0,266.0 551.0,260.7 556.4,255.0 563.0,256.6 565.8,263.4 561.8,270.0 560.4,275.6 565.8,278.0 574.0,281.0 585.0,279.0 590.7,276.6 596.0,275.0 601.5,273.9 607.0,268.5 611.0,265.7 607.0,260.0 605.6,252.0 608.0,245.0 613.7,240.0 618.0,237.5 627.0,230.4 634.0,220.0 636.6,211.0 634.8,204.0 630.4,198.7 632.2,191.7 637.5,186.4 646.3,181.0 653.3,176.7 660.4,175.0 662.2,179.4 660.4,186.4 657.5,190.0 654.0,189.0 652.5,193.0 656.0,195.0 653.3,202.3 650.7,209.3 651.6,214.6 656.0,218.0 661.3,220.8 669.2,218.0 671.8,209.3 676.2,205.0 683.3,202.3 690.3,197.9 697.4,192.6 704.4,190.0 709.7,186.4 715.0,181.0 716.7,175.9 720.3,170.6 723.8,167.0 727.3,163.5 731.0,160.0 734.0,153.9 742.4,145.7 750.5,134.9 757.3,124.0 762.7,113.0 765.4,102.4 766.8,91.5 768.0,80.7 766.8,69.8 761.3,59.0 764.0,55.0 769.5,53.6 772.0,48.0 776.0,43.0 844.0,43.0 849.5,48.0 853.5,56.0 856.0,67.0 855.0,78.0 856.0,86.0 851.0,91.5 849.5,98.0 846.7,105.0 846.0,112.0 845.4,118.6 842.7,126.8 841.0,135.0 840.0,143.0 836.0,144.4 834.5,137.6 830.5,136.0 826.4,140.0 822.3,144.4 819.6,153.9 818.0,162.0 821.0,170.0 822.4,176.0 821.0,186.0 819.6,192.5 817.0,208.8 818.0,222.0 823.7,233.0 830.5,241.0 832.0,246.8 830.0,252.0 827.8,255.0 823.7,263.0 818.0,271.0 813.0,276.6 807.4,282.0 802.0,286.0 796.6,288.8 792.5,294.0 789.8,292.9 791.0,284.7 790.0,279.0 793.0,273.0 798.0,267.0 801.0,261.0 802.0,254.0 799.0,249.0 793.0,247.0 786.0,246.0 780.0,248.0 776.5,252.0 775.5,258.0 775.0,266.0 776.0,274.0 775.0,282.0 773.5,290.0 770.8,287.4 770.8,280.7 766.8,279.0 761.3,279.0 756.0,282.0 751.9,287.4 749.0,295.6 747.8,303.7 746.4,311.8 742.4,317.0 738.3,321.0 734.0,320.0 731.5,314.6 730.0,306.0 730.0,298.0 731.5,290.0 726.0,287.4 720.7,290.0 714.0,294.0 707.0,301.0 701.7,307.8 696.3,314.6 693.6,322.7 688.0,325.0 681.5,326.0 676.2,326.0 665.7,326.5 658.0,329.5 653.3,330.6 650.7,328.6 655.0,325.5 662.1,321.8 659.0,317.0 654.5,314.8 651.8,314.0 654.8,318.5 651.6,323.5 647.5,320.5 644.5,314.0 642.5,310.5 638.0,309.5 633.0,310.0 629.6,311.5 626.5,315.0 625.0,319.0 627.0,325.0 632.2,332.0 636.6,337.4 634.0,344.5 627.0,347.5 620.0,352.5 614.0,359.3 610.0,367.4 604.7,375.6 600.6,383.7 592.5,385.0 584.4,381.0 580.0,375.6 576.0,368.8 569.5,363.4 565.4,358.0 568.0,351.0 566.8,344.4 573.5,340.0 579.0,337.6 587.0,332.0 589.8,323.0 586.0,320.0 575.0,321.0 568.0,322.0 560.4,320.0 549.6,319.0 541.4,320.0 536.0,324.0 527.9,324.0 519.8,321.7 514.3,325.7 506.0,328.4 498.0,333.9 487.2,336.6 481.8,333.9 476.4,335.0 471.0,344.7 465.5,339.0 457.4,336.6 452.0,329.8 443.8,331.0 435.7,331.0 427.6,328.4 422.0,331.0 416.7,336.6 411.3,340.6" fill="#a4b066"/>
<polygon points="481.3,367.4 489.5,366.0 494.9,363.4 503.0,364.7 508.5,362.0 516.6,359.3 520.7,353.9 523.4,347.0 530.0,343.0 535.6,341.7 542.4,347.0 547.8,351.0 554.6,355.0 557.3,362.0 558.6,370.0 554.6,375.6 549.0,378.0 547.8,385.0 542.4,391.8 538.3,396.0 534.0,387.8 527.4,385.0 519.3,387.8 511.0,390.5 508.5,397.0 504.4,405.0 499.0,409.5 495.0,416.0 489.5,413.5 484.0,408.0 481.3,401.0 477.3,397.0 476.0,390.5 478.6,383.7 474.6,379.6 470.5,377.0 476.0,373.0" fill="#a4b066"/>
</g>
<g filter="url(#inner2)" opacity="0.45">
<polygon points="152.0,43.0 330.0,43.0 325.0,50.0 318.5,49.0 316.0,54.0 306.0,56.0 306.0,63.0 297.0,66.0 291.0,75.0 293.0,85.0 306.0,99.0 321.0,120.0 329.0,124.0 337.0,148.0 345.0,170.0 352.0,186.0 360.0,200.0 361.0,208.0 356.0,222.0 352.0,235.0 348.0,251.0 349.0,260.0 356.0,264.0 358.6,261.0 362.0,270.0 360.0,281.0 354.6,291.0 348.0,296.0 346.4,302.0 332.7,304.4 324.0,306.6 317.5,305.5 311.0,308.7 302.4,308.7 297.0,305.5 291.5,304.4 287.2,308.7 281.8,310.9 278.0,316.0 275.3,319.6 270.9,319.6 268.0,315.0 265.5,312.0 260.1,313.0 255.8,319.6 250.3,321.7 246.0,329.3 241.7,321.7 236.3,315.2 230.8,317.4 225.4,313.0 226.5,306.6 230.8,302.2 231.9,294.6 235.2,289.2 237.3,282.7 240.6,276.2 246.0,271.9 250.3,267.5 252.5,261.0 253.6,252.4 252.5,244.8 249.3,239.4 248.2,232.9 243.8,227.4 236.3,224.2 231.9,218.8 225.4,216.6 226.5,211.2 233.0,204.7 240.6,198.2 242.8,191.7 250.3,187.3 256.0,188.4 254.7,183.0 262.3,176.5 258.5,167.4 250.0,164.7 242.0,156.6 236.8,153.9 231.0,151.0 223.0,148.5 215.0,156.6 209.6,164.7 201.5,162.0 193.4,153.9 185.0,151.0 177.0,148.5 182.5,141.7 190.7,135.0 204.0,128.0 198.8,121.0 190.7,118.6 190.7,110.5 198.8,102.4 200.0,91.5 202.9,78.0 207.0,67.0 204.0,60.0 193.4,61.7 185.0,56.0 179.8,67.0 175.8,61.7 166.0,50.8 163.5,45.0 152.7,52.0" fill="#98925a"/>
<polygon points="6.0,43.0 152.0,43.0 152.0,150.0 82.0,150.0 78.0,168.0 76.5,173.0 73.0,183.0 65.0,188.5 57.0,185.8 51.5,194.0 40.7,200.7 32.5,207.5 27.0,214.0 16.0,217.0 19.0,225.0 13.5,233.0 6.0,234.5" fill="#98925a"/>
<polygon points="6.0,365.8 10.8,367.0 12.0,383.0 6.0,384.7" fill="#98925a"/>
<polygon points="6.0,386.0 13.5,386.0 20.0,393.0 19.0,402.0 27.0,413.0 35.0,421.0 40.7,432.0 42.0,440.0 50.0,447.0 50.0,452.5 46.0,455.0 35.0,451.0 24.4,445.7 16.0,443.0 6.0,440.0" fill="#98925a"/>
<polygon points="6.0,444.0 15.0,445.7 17.6,451.0 29.8,456.6 40.7,466.0 46.0,475.6 46.0,482.0 40.7,486.0 29.8,494.6 21.7,500.0 16.0,507.0 6.0,508.5" fill="#98925a"/>
<polygon points="6.0,510.0 13.5,512.0 24.4,512.0 35.0,509.5 46.0,509.5 54.0,515.0 62.0,520.0 71.0,521.7 65.0,528.5 58.0,535.0 62.0,542.0 62.0,550.0 58.0,554.0 54.0,549.0 48.8,551.5 44.7,555.6 48.8,559.6 51.5,567.8 50.0,577.0 44.7,581.0 40.7,581.0 42.0,589.5 35.0,600.0 31.0,592.0 27.0,586.8 21.7,589.5 13.5,593.5 20.0,605.7 19.0,616.6 15.0,627.0 10.8,635.6 10.8,646.0 6.0,648.0" fill="#98925a"/>
<polygon points="28.0,716.0 33.0,712.0 38.7,707.6 46.4,704.7 56.0,709.6 63.8,710.5 71.6,715.4 73.0,716.0" fill="#98925a"/>
<polygon points="350.0,392.0 352.4,386.2 356.8,384.7 359.8,383.2 359.0,378.8 362.0,375.0 365.8,377.3 368.8,380.3 373.2,379.5 375.5,375.0 377.7,372.0 380.7,369.0 386.4,363.0 392.6,362.0 397.0,360.0 401.6,355.7 407.5,354.2 413.5,354.0 421.2,352.0 425.4,359.0 431.4,364.6 437.3,367.6 440.3,369.8 443.3,366.0 447.8,364.6 450.0,369.0 447.8,375.8 444.5,380.3 447.8,383.2 453.8,385.5 456.7,390.7 461.2,395.9 459.7,402.6 456.7,410.0 453.8,417.5 451.7,422.0 450.3,426.8 447.6,433.6 444.9,440.3 442.2,447.1 439.5,453.9 438.1,460.7 436.8,467.4 438.1,474.2 435.4,481.0 431.3,483.7 427.3,481.0 423.2,483.7 425.9,489.1 430.7,491.2 428.6,495.9 423.2,498.6 417.8,501.3 411.0,504.7 410.3,501.3 411.7,495.9 412.4,490.5 409.6,486.4 406.9,482.4 404.9,478.3 408.3,475.6 411.0,472.9 409.6,468.8 402.9,471.5 402.0,476.0 402.2,481.0 400.8,487.8 402.2,494.6 397.4,495.2 390.7,491.8 383.9,489.8 380.5,485.0 385.2,482.4 388.0,478.3 385.2,471.5 382.5,464.7 380.5,458.0 381.9,451.2 380.5,446.4 376.4,443.0 375.8,437.6 379.1,433.6 383.9,430.8 386.0,436.0 389.6,435.4 393.4,431.0 397.0,425.0 397.8,417.5 396.3,411.6 391.0,409.0 389.6,411.6 386.6,407.0 386.0,400.0 381.4,396.7 374.7,397.4 374.7,404.0 379.2,410.0 379.2,413.0 384.4,416.0 386.6,422.0 385.2,428.0 380.7,431.0 377.7,428.0 379.2,423.5 377.7,419.0 373.2,418.3 371.7,420.5 366.0,422.0 362.0,421.3 359.8,425.7 356.1,423.5 357.6,419.0 354.6,414.5 350.9,410.0 350.1,402.6 350.9,396.7" fill="#98925a"/>
<polygon points="410.0,339.0 411.3,328.4 412.7,314.9 416.7,309.5 423.5,310.8 430.3,306.7 438.4,302.7 443.9,304.0 452.0,298.6 460.0,293.0 468.3,287.8 471.0,281.0 477.7,278.3 485.9,279.6 490.0,275.6 496.7,274.0 503.5,278.0 514.3,278.0 525.0,274.0 536.0,270.0 544.0,266.0 551.0,260.7 556.4,255.0 563.0,256.6 565.8,263.4 561.8,270.0 560.4,275.6 565.8,278.0 574.0,281.0 585.0,279.0 590.7,276.6 596.0,275.0 601.5,273.9 607.0,268.5 611.0,265.7 607.0,260.0 605.6,252.0 608.0,245.0 613.7,240.0 618.0,237.5 627.0,230.4 634.0,220.0 636.6,211.0 634.8,204.0 630.4,198.7 632.2,191.7 637.5,186.4 646.3,181.0 653.3,176.7 660.4,175.0 662.2,179.4 660.4,186.4 657.5,190.0 654.0,189.0 652.5,193.0 656.0,195.0 653.3,202.3 650.7,209.3 651.6,214.6 656.0,218.0 661.3,220.8 669.2,218.0 671.8,209.3 676.2,205.0 683.3,202.3 690.3,197.9 697.4,192.6 704.4,190.0 709.7,186.4 715.0,181.0 716.7,175.9 720.3,170.6 723.8,167.0 727.3,163.5 731.0,160.0 734.0,153.9 742.4,145.7 750.5,134.9 757.3,124.0 762.7,113.0 765.4,102.4 766.8,91.5 768.0,80.7 766.8,69.8 761.3,59.0 764.0,55.0 769.5,53.6 772.0,48.0 776.0,43.0 844.0,43.0 849.5,48.0 853.5,56.0 856.0,67.0 855.0,78.0 856.0,86.0 851.0,91.5 849.5,98.0 846.7,105.0 846.0,112.0 845.4,118.6 842.7,126.8 841.0,135.0 840.0,143.0 836.0,144.4 834.5,137.6 830.5,136.0 826.4,140.0 822.3,144.4 819.6,153.9 818.0,162.0 821.0,170.0 822.4,176.0 821.0,186.0 819.6,192.5 817.0,208.8 818.0,222.0 823.7,233.0 830.5,241.0 832.0,246.8 830.0,252.0 827.8,255.0 823.7,263.0 818.0,271.0 813.0,276.6 807.4,282.0 802.0,286.0 796.6,288.8 792.5,294.0 789.8,292.9 791.0,284.7 790.0,279.0 793.0,273.0 798.0,267.0 801.0,261.0 802.0,254.0 799.0,249.0 793.0,247.0 786.0,246.0 780.0,248.0 776.5,252.0 775.5,258.0 775.0,266.0 776.0,274.0 775.0,282.0 773.5,290.0 770.8,287.4 770.8,280.7 766.8,279.0 761.3,279.0 756.0,282.0 751.9,287.4 749.0,295.6 747.8,303.7 746.4,311.8 742.4,317.0 738.3,321.0 734.0,320.0 731.5,314.6 730.0,306.0 730.0,298.0 731.5,290.0 726.0,287.4 720.7,290.0 714.0,294.0 707.0,301.0 701.7,307.8 696.3,314.6 693.6,322.7 688.0,325.0 681.5,326.0 676.2,326.0 665.7,326.5 658.0,329.5 653.3,330.6 650.7,328.6 655.0,325.5 662.1,321.8 659.0,317.0 654.5,314.8 651.8,314.0 654.8,318.5 651.6,323.5 647.5,320.5 644.5,314.0 642.5,310.5 638.0,309.5 633.0,310.0 629.6,311.5 626.5,315.0 625.0,319.0 627.0,325.0 632.2,332.0 636.6,337.4 634.0,344.5 627.0,347.5 620.0,352.5 614.0,359.3 610.0,367.4 604.7,375.6 600.6,383.7 592.5,385.0 584.4,381.0 580.0,375.6 576.0,368.8 569.5,363.4 565.4,358.0 568.0,351.0 566.8,344.4 573.5,340.0 579.0,337.6 587.0,332.0 589.8,323.0 586.0,320.0 575.0,321.0 568.0,322.0 560.4,320.0 549.6,319.0 541.4,320.0 536.0,324.0 527.9,324.0 519.8,321.7 514.3,325.7 506.0,328.4 498.0,333.9 487.2,336.6 481.8,333.9 476.4,335.0 471.0,344.7 465.5,339.0 457.4,336.6 452.0,329.8 443.8,331.0 435.7,331.0 427.6,328.4 422.0,331.0 416.7,336.6 411.3,340.6" fill="#98925a"/>
<polygon points="481.3,367.4 489.5,366.0 494.9,363.4 503.0,364.7 508.5,362.0 516.6,359.3 520.7,353.9 523.4,347.0 530.0,343.0 535.6,341.7 542.4,347.0 547.8,351.0 554.6,355.0 557.3,362.0 558.6,370.0 554.6,375.6 549.0,378.0 547.8,385.0 542.4,391.8 538.3,396.0 534.0,387.8 527.4,385.0 519.3,387.8 511.0,390.5 508.5,397.0 504.4,405.0 499.0,409.5 495.0,416.0 489.5,413.5 484.0,408.0 481.3,401.0 477.3,397.0 476.0,390.5 478.6,383.7 474.6,379.6 470.5,377.0 476.0,373.0" fill="#98925a"/>
</g>
<g filter="url(#blur8)">
<ellipse cx="322" cy="150" rx="18" ry="70" transform="rotate(-14 322 150)" fill="#9a8c54" opacity="0.85"/>
<ellipse cx="300" cy="85" rx="38" ry="24" transform="rotate(10 300 85)" fill="#9a8c54" opacity="0.8"/>
<ellipse cx="262" cy="70" rx="18" ry="16" transform="rotate(0 262 70)" fill="#9a8c54" opacity="0.6"/>
<ellipse cx="312" cy="268" rx="16" ry="30" transform="rotate(-10 312 268)" fill="#9a8c54" opacity="0.8"/>
<ellipse cx="285" cy="285" rx="18" ry="14" transform="rotate(0 285 285)" fill="#9a8c54" opacity="0.5"/>
<ellipse cx="335" cy="215" rx="12" ry="30" transform="rotate(-5 335 215)" fill="#8a7a48" opacity="0.5"/>
<ellipse cx="210" cy="110" rx="12" ry="30" transform="rotate(0 210 110)" fill="#90b672" opacity="0.5"/>
<ellipse cx="250" cy="205" rx="14" ry="25" transform="rotate(0 250 205)" fill="#90b672" opacity="0.7"/>
<ellipse cx="262" cy="295" rx="24" ry="12" transform="rotate(0 262 295)" fill="#90b672" opacity="0.6"/>
<ellipse cx="262" cy="240" rx="9" ry="28" transform="rotate(10 262 240)" fill="#90b672" opacity="0.7"/>
<ellipse cx="240" cy="290" rx="8" ry="16" transform="rotate(0 240 290)" fill="#90b672" opacity="0.5"/>
<ellipse cx="230" cy="150" rx="25" ry="8" transform="rotate(0 230 150)" fill="#90b672" opacity="0.4"/>
<ellipse cx="292" cy="165" rx="10" ry="14" transform="rotate(0 292 165)" fill="#90b672" opacity="0.6"/>
<ellipse cx="238" cy="300" rx="10" ry="8" transform="rotate(0 238 300)" fill="#90b672" opacity="0.4"/>
<ellipse cx="690" cy="255" rx="42" ry="22" transform="rotate(-22 690 255)" fill="#9a8c54" opacity="0.9"/>
<ellipse cx="700" cy="262" rx="22" ry="12" transform="rotate(-25 700 262)" fill="#8a7a48" opacity="0.7"/>
<ellipse cx="642" cy="255" rx="16" ry="24" transform="rotate(10 642 255)" fill="#9a8c54" opacity="0.8"/>
<ellipse cx="735" cy="215" rx="30" ry="16" transform="rotate(-30 735 215)" fill="#9a8c54" opacity="0.8"/>
<ellipse cx="770" cy="185" rx="22" ry="14" transform="rotate(-30 770 185)" fill="#9a8c54" opacity="0.7"/>
<ellipse cx="805" cy="95" rx="11" ry="45" transform="rotate(8 805 95)" fill="#9a8c54" opacity="0.85"/>
<ellipse cx="800" cy="150" rx="10" ry="22" transform="rotate(10 800 150)" fill="#9a8c54" opacity="0.6"/>
<ellipse cx="775" cy="110" rx="6" ry="25" transform="rotate(12 775 110)" fill="#9a8c54" opacity="0.5"/>
<ellipse cx="832" cy="90" rx="7" ry="30" transform="rotate(5 832 90)" fill="#9a8c54" opacity="0.5"/>
<ellipse cx="495" cy="300" rx="55" ry="11" transform="rotate(-13 495 300)" fill="#9a8c54" opacity="0.85"/>
<ellipse cx="560" cy="290" rx="20" ry="10" transform="rotate(-20 560 290)" fill="#9a8c54" opacity="0.6"/>
<ellipse cx="600" cy="355" rx="15" ry="18" transform="rotate(0 600 355)" fill="#9a8c54" opacity="0.85"/>
<ellipse cx="625" cy="335" rx="8" ry="12" transform="rotate(0 625 335)" fill="#9a8c54" opacity="0.5"/>
<ellipse cx="517" cy="388" rx="30" ry="8" transform="rotate(-18 517 388)" fill="#9a8c54" opacity="0.8"/>
<ellipse cx="428" cy="415" rx="13" ry="38" transform="rotate(8 428 415)" fill="#9a8c54" opacity="0.85"/>
<ellipse cx="432" cy="400" rx="8" ry="18" transform="rotate(0 432 400)" fill="#8a7a48" opacity="0.5"/>
<ellipse cx="400" cy="460" rx="6" ry="18" transform="rotate(0 400 460)" fill="#9a8c54" opacity="0.4"/>
<ellipse cx="20" cy="555" rx="22" ry="32" transform="rotate(0 20 555)" fill="#9a8c54" opacity="0.7"/>
<ellipse cx="60" cy="110" rx="60" ry="40" transform="rotate(0 60 110)" fill="#9a8c54" opacity="0.5"/>
<ellipse cx="30" cy="475" rx="14" ry="18" transform="rotate(0 30 475)" fill="#9a8c54" opacity="0.4"/>
<ellipse cx="795" cy="228" rx="14" ry="10" transform="rotate(0 795 228)" fill="#90b672" opacity="0.5"/>
<ellipse cx="815" cy="262" rx="10" ry="14" transform="rotate(30 815 262)" fill="#90b672" opacity="0.5"/>
<ellipse cx="745" cy="150" rx="8" ry="18" transform="rotate(35 745 150)" fill="#90b672" opacity="0.45"/>
<ellipse cx="655" cy="195" rx="6" ry="14" transform="rotate(10 655 195)" fill="#90b672" opacity="0.4"/>
<ellipse cx="25" cy="415" rx="14" ry="32" transform="rotate(-25 25 415)" fill="#90b672" opacity="0.8"/>
<ellipse cx="24" cy="472" rx="16" ry="18" transform="rotate(0 24 472)" fill="#90b672" opacity="0.65"/>
<ellipse cx="30" cy="515" rx="22" ry="6" transform="rotate(0 30 515)" fill="#90b672" opacity="0.5"/>
<ellipse cx="40" cy="520" rx="20" ry="8" transform="rotate(0 40 520)" fill="#90b672" opacity="0.4"/>
</g>
<rect x="6" y="44" width="1006" height="672" fill="#6a5a28" filter="url(#noise2)" opacity="0.18"/>
<g filter="url(#blur1)" fill="none" stroke-linejoin="round">
<polygon points="152.0,43.0 330.0,43.0 325.0,50.0 318.5,49.0 316.0,54.0 306.0,56.0 306.0,63.0 297.0,66.0 291.0,75.0 293.0,85.0 306.0,99.0 321.0,120.0 329.0,124.0 337.0,148.0 345.0,170.0 352.0,186.0 360.0,200.0 361.0,208.0 356.0,222.0 352.0,235.0 348.0,251.0 349.0,260.0 356.0,264.0 358.6,261.0 362.0,270.0 360.0,281.0 354.6,291.0 348.0,296.0 346.4,302.0 332.7,304.4 324.0,306.6 317.5,305.5 311.0,308.7 302.4,308.7 297.0,305.5 291.5,304.4 287.2,308.7 281.8,310.9 278.0,316.0 275.3,319.6 270.9,319.6 268.0,315.0 265.5,312.0 260.1,313.0 255.8,319.6 250.3,321.7 246.0,329.3 241.7,321.7 236.3,315.2 230.8,317.4 225.4,313.0 226.5,306.6 230.8,302.2 231.9,294.6 235.2,289.2 237.3,282.7 240.6,276.2 246.0,271.9 250.3,267.5 252.5,261.0 253.6,252.4 252.5,244.8 249.3,239.4 248.2,232.9 243.8,227.4 236.3,224.2 231.9,218.8 225.4,216.6 226.5,211.2 233.0,204.7 240.6,198.2 242.8,191.7 250.3,187.3 256.0,188.4 254.7,183.0 262.3,176.5 258.5,167.4 250.0,164.7 242.0,156.6 236.8,153.9 231.0,151.0 223.0,148.5 215.0,156.6 209.6,164.7 201.5,162.0 193.4,153.9 185.0,151.0 177.0,148.5 182.5,141.7 190.7,135.0 204.0,128.0 198.8,121.0 190.7,118.6 190.7,110.5 198.8,102.4 200.0,91.5 202.9,78.0 207.0,67.0 204.0,60.0 193.4,61.7 185.0,56.0 179.8,67.0 175.8,61.7 166.0,50.8 163.5,45.0 152.7,52.0" stroke="#b6cc84" stroke-width="2.4" opacity="0.5"/>
<polygon points="6.0,43.0 152.0,43.0 152.0,150.0 82.0,150.0 78.0,168.0 76.5,173.0 73.0,183.0 65.0,188.5 57.0,185.8 51.5,194.0 40.7,200.7 32.5,207.5 27.0,214.0 16.0,217.0 19.0,225.0 13.5,233.0 6.0,234.5" stroke="#b6cc84" stroke-width="2.4" opacity="0.5"/>
<polygon points="6.0,365.8 10.8,367.0 12.0,383.0 6.0,384.7" stroke="#b6cc84" stroke-width="2.4" opacity="0.5"/>
<polygon points="6.0,386.0 13.5,386.0 20.0,393.0 19.0,402.0 27.0,413.0 35.0,421.0 40.7,432.0 42.0,440.0 50.0,447.0 50.0,452.5 46.0,455.0 35.0,451.0 24.4,445.7 16.0,443.0 6.0,440.0" stroke="#b6cc84" stroke-width="2.4" opacity="0.5"/>
<polygon points="6.0,444.0 15.0,445.7 17.6,451.0 29.8,456.6 40.7,466.0 46.0,475.6 46.0,482.0 40.7,486.0 29.8,494.6 21.7,500.0 16.0,507.0 6.0,508.5" stroke="#b6cc84" stroke-width="2.4" opacity="0.5"/>
<polygon points="6.0,510.0 13.5,512.0 24.4,512.0 35.0,509.5 46.0,509.5 54.0,515.0 62.0,520.0 71.0,521.7 65.0,528.5 58.0,535.0 62.0,542.0 62.0,550.0 58.0,554.0 54.0,549.0 48.8,551.5 44.7,555.6 48.8,559.6 51.5,567.8 50.0,577.0 44.7,581.0 40.7,581.0 42.0,589.5 35.0,600.0 31.0,592.0 27.0,586.8 21.7,589.5 13.5,593.5 20.0,605.7 19.0,616.6 15.0,627.0 10.8,635.6 10.8,646.0 6.0,648.0" stroke="#b6cc84" stroke-width="2.4" opacity="0.5"/>
<polygon points="28.0,716.0 33.0,712.0 38.7,707.6 46.4,704.7 56.0,709.6 63.8,710.5 71.6,715.4 73.0,716.0" stroke="#b6cc84" stroke-width="2.4" opacity="0.5"/>
<polygon points="350.0,392.0 352.4,386.2 356.8,384.7 359.8,383.2 359.0,378.8 362.0,375.0 365.8,377.3 368.8,380.3 373.2,379.5 375.5,375.0 377.7,372.0 380.7,369.0 386.4,363.0 392.6,362.0 397.0,360.0 401.6,355.7 407.5,354.2 413.5,354.0 421.2,352.0 425.4,359.0 431.4,364.6 437.3,367.6 440.3,369.8 443.3,366.0 447.8,364.6 450.0,369.0 447.8,375.8 444.5,380.3 447.8,383.2 453.8,385.5 456.7,390.7 461.2,395.9 459.7,402.6 456.7,410.0 453.8,417.5 451.7,422.0 450.3,426.8 447.6,433.6 444.9,440.3 442.2,447.1 439.5,453.9 438.1,460.7 436.8,467.4 438.1,474.2 435.4,481.0 431.3,483.7 427.3,481.0 423.2,483.7 425.9,489.1 430.7,491.2 428.6,495.9 423.2,498.6 417.8,501.3 411.0,504.7 410.3,501.3 411.7,495.9 412.4,490.5 409.6,486.4 406.9,482.4 404.9,478.3 408.3,475.6 411.0,472.9 409.6,468.8 402.9,471.5 402.0,476.0 402.2,481.0 400.8,487.8 402.2,494.6 397.4,495.2 390.7,491.8 383.9,489.8 380.5,485.0 385.2,482.4 388.0,478.3 385.2,471.5 382.5,464.7 380.5,458.0 381.9,451.2 380.5,446.4 376.4,443.0 375.8,437.6 379.1,433.6 383.9,430.8 386.0,436.0 389.6,435.4 393.4,431.0 397.0,425.0 397.8,417.5 396.3,411.6 391.0,409.0 389.6,411.6 386.6,407.0 386.0,400.0 381.4,396.7 374.7,397.4 374.7,404.0 379.2,410.0 379.2,413.0 384.4,416.0 386.6,422.0 385.2,428.0 380.7,431.0 377.7,428.0 379.2,423.5 377.7,419.0 373.2,418.3 371.7,420.5 366.0,422.0 362.0,421.3 359.8,425.7 356.1,423.5 357.6,419.0 354.6,414.5 350.9,410.0 350.1,402.6 350.9,396.7" stroke="#b6cc84" stroke-width="2.4" opacity="0.5"/>
<polygon points="410.0,339.0 411.3,328.4 412.7,314.9 416.7,309.5 423.5,310.8 430.3,306.7 438.4,302.7 443.9,304.0 452.0,298.6 460.0,293.0 468.3,287.8 471.0,281.0 477.7,278.3 485.9,279.6 490.0,275.6 496.7,274.0 503.5,278.0 514.3,278.0 525.0,274.0 536.0,270.0 544.0,266.0 551.0,260.7 556.4,255.0 563.0,256.6 565.8,263.4 561.8,270.0 560.4,275.6 565.8,278.0 574.0,281.0 585.0,279.0 590.7,276.6 596.0,275.0 601.5,273.9 607.0,268.5 611.0,265.7 607.0,260.0 605.6,252.0 608.0,245.0 613.7,240.0 618.0,237.5 627.0,230.4 634.0,220.0 636.6,211.0 634.8,204.0 630.4,198.7 632.2,191.7 637.5,186.4 646.3,181.0 653.3,176.7 660.4,175.0 662.2,179.4 660.4,186.4 657.5,190.0 654.0,189.0 652.5,193.0 656.0,195.0 653.3,202.3 650.7,209.3 651.6,214.6 656.0,218.0 661.3,220.8 669.2,218.0 671.8,209.3 676.2,205.0 683.3,202.3 690.3,197.9 697.4,192.6 704.4,190.0 709.7,186.4 715.0,181.0 716.7,175.9 720.3,170.6 723.8,167.0 727.3,163.5 731.0,160.0 734.0,153.9 742.4,145.7 750.5,134.9 757.3,124.0 762.7,113.0 765.4,102.4 766.8,91.5 768.0,80.7 766.8,69.8 761.3,59.0 764.0,55.0 769.5,53.6 772.0,48.0 776.0,43.0 844.0,43.0 849.5,48.0 853.5,56.0 856.0,67.0 855.0,78.0 856.0,86.0 851.0,91.5 849.5,98.0 846.7,105.0 846.0,112.0 845.4,118.6 842.7,126.8 841.0,135.0 840.0,143.0 836.0,144.4 834.5,137.6 830.5,136.0 826.4,140.0 822.3,144.4 819.6,153.9 818.0,162.0 821.0,170.0 822.4,176.0 821.0,186.0 819.6,192.5 817.0,208.8 818.0,222.0 823.7,233.0 830.5,241.0 832.0,246.8 830.0,252.0 827.8,255.0 823.7,263.0 818.0,271.0 813.0,276.6 807.4,282.0 802.0,286.0 796.6,288.8 792.5,294.0 789.8,292.9 791.0,284.7 790.0,279.0 793.0,273.0 798.0,267.0 801.0,261.0 802.0,254.0 799.0,249.0 793.0,247.0 786.0,246.0 780.0,248.0 776.5,252.0 775.5,258.0 775.0,266.0 776.0,274.0 775.0,282.0 773.5,290.0 770.8,287.4 770.8,280.7 766.8,279.0 761.3,279.0 756.0,282.0 751.9,287.4 749.0,295.6 747.8,303.7 746.4,311.8 742.4,317.0 738.3,321.0 734.0,320.0 731.5,314.6 730.0,306.0 730.0,298.0 731.5,290.0 726.0,287.4 720.7,290.0 714.0,294.0 707.0,301.0 701.7,307.8 696.3,314.6 693.6,322.7 688.0,325.0 681.5,326.0 676.2,326.0 665.7,326.5 658.0,329.5 653.3,330.6 650.7,328.6 655.0,325.5 662.1,321.8 659.0,317.0 654.5,314.8 651.8,314.0 654.8,318.5 651.6,323.5 647.5,320.5 644.5,314.0 642.5,310.5 638.0,309.5 633.0,310.0 629.6,311.5 626.5,315.0 625.0,319.0 627.0,325.0 632.2,332.0 636.6,337.4 634.0,344.5 627.0,347.5 620.0,352.5 614.0,359.3 610.0,367.4 604.7,375.6 600.6,383.7 592.5,385.0 584.4,381.0 580.0,375.6 576.0,368.8 569.5,363.4 565.4,358.0 568.0,351.0 566.8,344.4 573.5,340.0 579.0,337.6 587.0,332.0 589.8,323.0 586.0,320.0 575.0,321.0 568.0,322.0 560.4,320.0 549.6,319.0 541.4,320.0 536.0,324.0 527.9,324.0 519.8,321.7 514.3,325.7 506.0,328.4 498.0,333.9 487.2,336.6 481.8,333.9 476.4,335.0 471.0,344.7 465.5,339.0 457.4,336.6 452.0,329.8 443.8,331.0 435.7,331.0 427.6,328.4 422.0,331.0 416.7,336.6 411.3,340.6" stroke="#b6cc84" stroke-width="2.4" opacity="0.5"/>
<polygon points="481.3,367.4 489.5,366.0 494.9,363.4 503.0,364.7 508.5,362.0 516.6,359.3 520.7,353.9 523.4,347.0 530.0,343.0 535.6,341.7 542.4,347.0 547.8,351.0 554.6,355.0 557.3,362.0 558.6,370.0 554.6,375.6 549.0,378.0 547.8,385.0 542.4,391.8 538.3,396.0 534.0,387.8 527.4,385.0 519.3,387.8 511.0,390.5 508.5,397.0 504.4,405.0 499.0,409.5 495.0,416.0 489.5,413.5 484.0,408.0 481.3,401.0 477.3,397.0 476.0,390.5 478.6,383.7 474.6,379.6 470.5,377.0 476.0,373.0" stroke="#b6cc84" stroke-width="2.4" opacity="0.5"/>
</g>
</g>
</g>
<path d="M6.0 440.5 C7.3 441.0 11.0 442.6 14.0 443.5 C17.0 444.4 20.3 444.6 24.0 446.0 C27.7 447.4 32.3 450.3 36.0 452.0 C39.7 453.7 44.3 455.3 46.0 456.0" fill="none" stroke="#1c2a30" stroke-width="1.6" stroke-linecap="round" stroke-linejoin="round"/>
<path d="M6.0 509.0 C7.3 509.3 11.7 511.2 14.0 511.0 C16.3 510.8 18.0 509.3 20.0 508.0 C22.0 506.7 25.0 503.8 26.0 503.0" fill="none" stroke="#1c2a30" stroke-width="1.6" stroke-linecap="round" stroke-linejoin="round"/>
<path d="M211.0 44.0 C211.4 45.1 212.6 47.0 213.7 50.8 C214.8 54.6 216.9 62.0 217.8 67.0 C218.7 72.0 218.4 75.9 219.0 80.7 C219.6 85.5 220.8 91.5 221.3 96.0 C221.8 100.5 221.6 103.6 221.9 107.8 C222.2 112.0 222.3 117.3 223.2 121.3 C224.1 125.3 226.2 129.3 227.3 132.0 C228.4 134.7 227.6 135.7 229.6 137.5 C231.6 139.3 236.1 141.2 239.5 143.0 C242.9 144.8 247.4 145.8 250.3 148.5 C253.2 151.2 254.2 155.4 257.0 159.0 C259.8 162.6 264.3 166.6 266.8 170.3 C269.3 174.0 270.7 176.9 272.0 181.0 C273.3 185.1 273.8 189.8 274.7 194.6 C275.6 199.3 276.7 204.5 277.6 209.5 C278.5 214.5 278.9 219.7 280.0 224.4 C281.1 229.2 283.0 234.5 284.0 238.0 C285.0 241.5 284.6 243.3 286.2 245.3 C287.8 247.3 290.5 249.0 293.5 250.0 C296.5 251.0 301.0 250.1 304.4 251.5 C307.8 252.9 311.3 256.4 313.9 258.3 C316.5 260.2 317.8 260.6 320.0 263.0 C322.2 265.4 325.7 269.5 327.4 273.0 C329.1 276.5 328.6 281.0 330.0 284.0 C331.4 287.0 333.7 288.1 335.6 290.8 C337.5 293.5 340.5 298.7 341.5 300.3" fill="none" stroke="#d8d8c8" stroke-width="2" stroke-linecap="round" stroke-linejoin="round" transform="translate(1.4,0.8)" opacity="0.8"/>
<path d="M211.0 44.0 C211.4 45.1 212.6 47.0 213.7 50.8 C214.8 54.6 216.9 62.0 217.8 67.0 C218.7 72.0 218.4 75.9 219.0 80.7 C219.6 85.5 220.8 91.5 221.3 96.0 C221.8 100.5 221.6 103.6 221.9 107.8 C222.2 112.0 222.3 117.3 223.2 121.3 C224.1 125.3 226.2 129.3 227.3 132.0 C228.4 134.7 227.6 135.7 229.6 137.5 C231.6 139.3 236.1 141.2 239.5 143.0 C242.9 144.8 247.4 145.8 250.3 148.5 C253.2 151.2 254.2 155.4 257.0 159.0 C259.8 162.6 264.3 166.6 266.8 170.3 C269.3 174.0 270.7 176.9 272.0 181.0 C273.3 185.1 273.8 189.8 274.7 194.6 C275.6 199.3 276.7 204.5 277.6 209.5 C278.5 214.5 278.9 219.7 280.0 224.4 C281.1 229.2 283.0 234.5 284.0 238.0 C285.0 241.5 284.6 243.3 286.2 245.3 C287.8 247.3 290.5 249.0 293.5 250.0 C296.5 251.0 301.0 250.1 304.4 251.5 C307.8 252.9 311.3 256.4 313.9 258.3 C316.5 260.2 317.8 260.6 320.0 263.0 C322.2 265.4 325.7 269.5 327.4 273.0 C329.1 276.5 328.6 281.0 330.0 284.0 C331.4 287.0 333.7 288.1 335.6 290.8 C337.5 293.5 340.5 298.7 341.5 300.3" fill="none" stroke="#0a0a0a" stroke-width="2.7" stroke-linecap="round" stroke-linejoin="round"/>
<path d="M795.0 44.0 C794.4 45.2 792.3 48.8 791.6 51.0 C790.9 53.2 791.9 54.7 791.0 57.2 C790.1 59.7 788.2 63.4 786.3 66.0 C784.3 68.6 781.7 71.5 779.3 73.0 C776.9 74.5 773.0 74.9 771.7 75.3" fill="none" stroke="#d8d8c8" stroke-width="2" stroke-linecap="round" stroke-linejoin="round" transform="translate(1.4,0.8)" opacity="0.8"/>
<path d="M795.0 44.0 C794.4 45.2 792.3 48.8 791.6 51.0 C790.9 53.2 791.9 54.7 791.0 57.2 C790.1 59.7 788.2 63.4 786.3 66.0 C784.3 68.6 781.7 71.5 779.3 73.0 C776.9 74.5 773.0 74.9 771.7 75.3" fill="none" stroke="#0a0a0a" stroke-width="2.7" stroke-linecap="round" stroke-linejoin="round"/>
<path d="M771.7 75.3 C772.2 76.4 773.8 79.5 774.9 81.9 C776.0 84.3 776.6 87.2 778.4 89.8 C780.2 92.4 784.5 95.1 785.8 97.7 C787.1 100.3 785.8 103.1 786.3 105.6 C786.8 108.1 788.8 110.0 788.9 112.7 C789.0 115.4 787.6 118.9 787.2 121.5 C786.8 124.1 787.3 126.2 786.3 128.5 C785.3 130.8 783.2 134.1 781.2 135.6 C779.2 137.1 777.4 136.8 774.0 137.3 C770.6 137.8 764.6 137.4 761.1 138.6 C757.6 139.8 755.0 142.3 752.8 144.4 C750.5 146.5 749.4 149.1 747.6 151.4 C745.9 153.8 744.9 157.0 742.3 158.5 C739.6 160.0 733.5 159.9 731.7 160.2" fill="none" stroke="#d8d8c8" stroke-width="2" stroke-linecap="round" stroke-linejoin="round" transform="translate(1.4,0.8)" opacity="0.8"/>
<path d="M771.7 75.3 C772.2 76.4 773.8 79.5 774.9 81.9 C776.0 84.3 776.6 87.2 778.4 89.8 C780.2 92.4 784.5 95.1 785.8 97.7 C787.1 100.3 785.8 103.1 786.3 105.6 C786.8 108.1 788.8 110.0 788.9 112.7 C789.0 115.4 787.6 118.9 787.2 121.5 C786.8 124.1 787.3 126.2 786.3 128.5 C785.3 130.8 783.2 134.1 781.2 135.6 C779.2 137.1 777.4 136.8 774.0 137.3 C770.6 137.8 764.6 137.4 761.1 138.6 C757.6 139.8 755.0 142.3 752.8 144.4 C750.5 146.5 749.4 149.1 747.6 151.4 C745.9 153.8 744.9 157.0 742.3 158.5 C739.6 160.0 733.5 159.9 731.7 160.2" fill="none" stroke="#0a0a0a" stroke-width="2.7" stroke-linecap="round" stroke-linejoin="round"/>
<path d="M840.0 44.0 C840.7 45.5 843.4 50.1 844.4 52.8 C845.4 55.4 846.4 57.6 846.2 59.9 C846.0 62.2 843.7 63.3 843.0 66.5 C842.3 69.7 842.3 74.7 841.8 79.2 C841.3 83.7 840.5 89.5 840.0 93.3 C839.5 97.1 838.9 99.2 839.1 102.1 C839.3 105.0 842.0 107.9 841.4 110.6 C840.8 113.2 837.6 115.9 835.6 118.0 C833.6 120.1 831.5 121.9 829.4 123.3 C827.3 124.7 824.8 124.7 822.9 126.4 C821.0 128.2 819.2 131.4 818.0 133.8 C816.8 136.2 815.7 138.9 815.4 140.9 C815.1 142.9 816.7 143.8 816.2 145.8 C815.8 147.9 813.6 150.2 812.7 153.2 C811.8 156.2 811.5 160.7 811.0 163.8 C810.5 166.9 811.3 169.6 810.0 172.0 C808.7 174.4 805.6 176.8 803.3 178.2 C801.0 179.6 797.5 178.8 796.2 180.3 C794.9 181.8 796.0 184.3 795.4 187.0 C794.8 189.7 794.0 193.5 792.7 196.7 C791.4 199.9 789.3 204.1 787.4 206.4 C785.5 208.7 782.3 209.7 781.3 210.4" fill="none" stroke="#d8d8c8" stroke-width="2" stroke-linecap="round" stroke-linejoin="round" transform="translate(1.4,0.8)" opacity="0.8"/>
<path d="M840.0 44.0 C840.7 45.5 843.4 50.1 844.4 52.8 C845.4 55.4 846.4 57.6 846.2 59.9 C846.0 62.2 843.7 63.3 843.0 66.5 C842.3 69.7 842.3 74.7 841.8 79.2 C841.3 83.7 840.5 89.5 840.0 93.3 C839.5 97.1 838.9 99.2 839.1 102.1 C839.3 105.0 842.0 107.9 841.4 110.6 C840.8 113.2 837.6 115.9 835.6 118.0 C833.6 120.1 831.5 121.9 829.4 123.3 C827.3 124.7 824.8 124.7 822.9 126.4 C821.0 128.2 819.2 131.4 818.0 133.8 C816.8 136.2 815.7 138.9 815.4 140.9 C815.1 142.9 816.7 143.8 816.2 145.8 C815.8 147.9 813.6 150.2 812.7 153.2 C811.8 156.2 811.5 160.7 811.0 163.8 C810.5 166.9 811.3 169.6 810.0 172.0 C808.7 174.4 805.6 176.8 803.3 178.2 C801.0 179.6 797.5 178.8 796.2 180.3 C794.9 181.8 796.0 184.3 795.4 187.0 C794.8 189.7 794.0 193.5 792.7 196.7 C791.4 199.9 789.3 204.1 787.4 206.4 C785.5 208.7 782.3 209.7 781.3 210.4" fill="none" stroke="#0a0a0a" stroke-width="2.7" stroke-linecap="round" stroke-linejoin="round"/>
<path d="M731.4 160.2 C732.5 161.4 735.5 164.7 737.9 167.3 C740.3 170.0 743.0 173.1 746.0 176.1 C749.0 179.1 752.8 181.2 756.1 185.2 C759.4 189.1 761.6 195.6 765.8 199.8 C770.0 204.0 778.7 208.6 781.3 210.4" fill="none" stroke="#d8d8c8" stroke-width="2" stroke-linecap="round" stroke-linejoin="round" transform="translate(1.4,0.8)" opacity="0.8"/>
<path d="M731.4 160.2 C732.5 161.4 735.5 164.7 737.9 167.3 C740.3 170.0 743.0 173.1 746.0 176.1 C749.0 179.1 752.8 181.2 756.1 185.2 C759.4 189.1 761.6 195.6 765.8 199.8 C770.0 204.0 778.7 208.6 781.3 210.4" fill="none" stroke="#0a0a0a" stroke-width="2.7" stroke-linecap="round" stroke-linejoin="round"/>
<path d="M781.3 210.4 C781.3 211.8 782.9 215.8 781.3 218.7 C779.7 221.5 774.0 224.6 771.9 227.5 C769.8 230.4 769.8 233.3 768.9 236.3 C768.0 239.3 766.7 244.1 766.3 245.6" fill="none" stroke="#d8d8c8" stroke-width="2" stroke-linecap="round" stroke-linejoin="round" transform="translate(1.4,0.8)" opacity="0.8"/>
<path d="M781.3 210.4 C781.3 211.8 782.9 215.8 781.3 218.7 C779.7 221.5 774.0 224.6 771.9 227.5 C769.8 230.4 769.8 233.3 768.9 236.3 C768.0 239.3 766.7 244.1 766.3 245.6" fill="none" stroke="#0a0a0a" stroke-width="2.7" stroke-linecap="round" stroke-linejoin="round"/>
<path d="M731.4 160.2 C731.0 161.1 730.1 163.5 729.3 165.9 C728.5 168.3 727.9 171.8 726.7 174.7 C725.5 177.6 724.2 180.9 722.3 183.5 C720.4 186.1 717.6 188.2 715.2 190.5 C712.9 192.8 710.6 195.7 708.2 197.6 C705.9 199.5 704.0 200.5 701.1 202.0 C698.2 203.5 694.1 205.1 690.6 206.4 C687.1 207.7 683.4 208.5 680.0 209.9 C676.6 211.3 673.1 213.2 670.0 215.0 C666.9 216.8 664.5 218.7 661.2 220.5 C657.9 222.3 653.6 224.4 650.0 226.0 C646.4 227.6 642.0 228.9 639.3 230.0 C636.6 231.1 636.1 231.3 634.0 232.6 C631.9 233.9 628.9 235.7 626.9 237.9 C624.9 240.1 623.5 243.1 622.0 245.9 C620.5 248.7 618.9 251.8 618.1 254.7 C617.3 257.6 617.4 260.3 617.2 263.5 C617.1 266.7 617.6 271.2 617.2 274.0 C616.8 276.8 616.5 278.6 614.6 280.2 C612.7 281.8 609.0 282.7 605.8 283.7 C602.6 284.7 598.7 285.9 595.2 286.0 C591.7 286.1 587.0 285.6 584.7 284.6 C582.4 283.6 582.0 280.9 581.5 280.2" fill="none" stroke="#d8d8c8" stroke-width="2" stroke-linecap="round" stroke-linejoin="round" transform="translate(1.4,0.8)" opacity="0.8"/>
<path d="M731.4 160.2 C731.0 161.1 730.1 163.5 729.3 165.9 C728.5 168.3 727.9 171.8 726.7 174.7 C725.5 177.6 724.2 180.9 722.3 183.5 C720.4 186.1 717.6 188.2 715.2 190.5 C712.9 192.8 710.6 195.7 708.2 197.6 C705.9 199.5 704.0 200.5 701.1 202.0 C698.2 203.5 694.1 205.1 690.6 206.4 C687.1 207.7 683.4 208.5 680.0 209.9 C676.6 211.3 673.1 213.2 670.0 215.0 C666.9 216.8 664.5 218.7 661.2 220.5 C657.9 222.3 653.6 224.4 650.0 226.0 C646.4 227.6 642.0 228.9 639.3 230.0 C636.6 231.1 636.1 231.3 634.0 232.6 C631.9 233.9 628.9 235.7 626.9 237.9 C624.9 240.1 623.5 243.1 622.0 245.9 C620.5 248.7 618.9 251.8 618.1 254.7 C617.3 257.6 617.4 260.3 617.2 263.5 C617.1 266.7 617.6 271.2 617.2 274.0 C616.8 276.8 616.5 278.6 614.6 280.2 C612.7 281.8 609.0 282.7 605.8 283.7 C602.6 284.7 598.7 285.9 595.2 286.0 C591.7 286.1 587.0 285.6 584.7 284.6 C582.4 283.6 582.0 280.9 581.5 280.2" fill="none" stroke="#0a0a0a" stroke-width="2.7" stroke-linecap="round" stroke-linejoin="round"/>
<path d="M661.2 220.5 C663.0 221.4 668.2 224.2 672.0 226.0 C675.8 227.8 679.3 229.9 684.2 231.5 C689.1 233.1 697.0 233.9 701.5 235.4 C706.0 236.9 708.4 238.8 711.5 240.6 C714.6 242.4 717.2 244.0 720.0 246.0 C722.8 248.0 725.8 250.1 728.5 252.5 C731.2 254.9 732.5 260.4 736.3 260.6 C740.0 260.8 747.4 255.6 751.0 253.8 C754.6 252.0 755.5 251.4 758.0 250.0 C760.5 248.6 764.9 246.3 766.3 245.6" fill="none" stroke="#d8d8c8" stroke-width="2" stroke-linecap="round" stroke-linejoin="round" transform="translate(1.4,0.8)" opacity="0.8"/>
<path d="M661.2 220.5 C663.0 221.4 668.2 224.2 672.0 226.0 C675.8 227.8 679.3 229.9 684.2 231.5 C689.1 233.1 697.0 233.9 701.5 235.4 C706.0 236.9 708.4 238.8 711.5 240.6 C714.6 242.4 717.2 244.0 720.0 246.0 C722.8 248.0 725.8 250.1 728.5 252.5 C731.2 254.9 732.5 260.4 736.3 260.6 C740.0 260.8 747.4 255.6 751.0 253.8 C754.6 252.0 755.5 251.4 758.0 250.0 C760.5 248.6 764.9 246.3 766.3 245.6" fill="none" stroke="#0a0a0a" stroke-width="2.7" stroke-linecap="round" stroke-linejoin="round"/>
<path d="M766.3 245.6 C767.5 245.5 770.4 245.7 773.3 245.1 C776.2 244.5 780.1 242.5 783.9 241.8 C787.7 241.1 791.7 240.1 796.2 240.7 C800.8 241.3 807.0 243.7 811.2 245.3 C815.4 246.9 819.7 249.6 821.4 250.4" fill="none" stroke="#d8d8c8" stroke-width="2" stroke-linecap="round" stroke-linejoin="round" transform="translate(1.4,0.8)" opacity="0.8"/>
<path d="M766.3 245.6 C767.5 245.5 770.4 245.7 773.3 245.1 C776.2 244.5 780.1 242.5 783.9 241.8 C787.7 241.1 791.7 240.1 796.2 240.7 C800.8 241.3 807.0 243.7 811.2 245.3 C815.4 246.9 819.7 249.6 821.4 250.4" fill="none" stroke="#0a0a0a" stroke-width="2.7" stroke-linecap="round" stroke-linejoin="round"/>
<path d="M766.3 245.6 C766.4 247.0 767.3 250.6 767.2 253.9 C767.1 257.2 764.4 261.7 765.9 265.3 C767.4 268.9 774.6 273.8 776.4 275.5" fill="none" stroke="#d8d8c8" stroke-width="2" stroke-linecap="round" stroke-linejoin="round" transform="translate(1.4,0.8)" opacity="0.8"/>
<path d="M766.3 245.6 C766.4 247.0 767.3 250.6 767.2 253.9 C767.1 257.2 764.4 261.7 765.9 265.3 C767.4 268.9 774.6 273.8 776.4 275.5" fill="none" stroke="#0a0a0a" stroke-width="2.7" stroke-linecap="round" stroke-linejoin="round"/>
<path d="M736.3 260.6 C735.8 262.0 734.9 266.0 733.5 268.7 C732.1 271.4 730.7 273.8 728.2 276.7 C725.7 279.6 721.3 283.3 718.5 286.4 C715.7 289.5 714.1 293.3 711.5 295.5 C708.9 297.7 705.6 298.2 702.7 299.6 C699.8 301.0 696.1 302.1 694.2 304.0 C692.3 305.9 691.9 308.7 691.2 311.0 C690.6 313.3 691.9 316.4 690.3 318.0 C688.7 319.6 684.3 321.3 681.5 320.7 C678.7 320.1 677.0 315.9 673.6 314.2 C670.2 312.5 665.1 311.4 661.3 310.5 C657.5 309.6 653.8 309.4 650.7 308.9 C647.6 308.4 645.2 308.1 642.8 307.5 C640.4 306.9 637.2 305.9 636.1 305.6" fill="none" stroke="#d8d8c8" stroke-width="2" stroke-linecap="round" stroke-linejoin="round" transform="translate(1.4,0.8)" opacity="0.8"/>
<path d="M736.3 260.6 C735.8 262.0 734.9 266.0 733.5 268.7 C732.1 271.4 730.7 273.8 728.2 276.7 C725.7 279.6 721.3 283.3 718.5 286.4 C715.7 289.5 714.1 293.3 711.5 295.5 C708.9 297.7 705.6 298.2 702.7 299.6 C699.8 301.0 696.1 302.1 694.2 304.0 C692.3 305.9 691.9 308.7 691.2 311.0 C690.6 313.3 691.9 316.4 690.3 318.0 C688.7 319.6 684.3 321.3 681.5 320.7 C678.7 320.1 677.0 315.9 673.6 314.2 C670.2 312.5 665.1 311.4 661.3 310.5 C657.5 309.6 653.8 309.4 650.7 308.9 C647.6 308.4 645.2 308.1 642.8 307.5 C640.4 306.9 637.2 305.9 636.1 305.6" fill="none" stroke="#0a0a0a" stroke-width="2.7" stroke-linecap="round" stroke-linejoin="round"/>
<path d="M636.1 280.7 C636.5 281.7 637.7 284.4 638.5 286.5 C639.3 288.6 640.8 291.1 641.0 293.4 C641.2 295.6 640.3 298.0 639.5 300.0 C638.7 302.0 636.7 304.7 636.1 305.6" fill="none" stroke="#d8d8c8" stroke-width="2" stroke-linecap="round" stroke-linejoin="round" transform="translate(1.4,0.8)" opacity="0.8"/>
<path d="M636.1 280.7 C636.5 281.7 637.7 284.4 638.5 286.5 C639.3 288.6 640.8 291.1 641.0 293.4 C641.2 295.6 640.3 298.0 639.5 300.0 C638.7 302.0 636.7 304.7 636.1 305.6" fill="none" stroke="#0a0a0a" stroke-width="2.7" stroke-linecap="round" stroke-linejoin="round"/>
<path d="M636.1 305.6 C634.2 305.2 627.8 302.8 625.0 303.0 C622.2 303.2 620.2 305.3 619.4 307.0 C618.6 308.7 619.7 310.8 620.0 313.0 C620.3 315.2 621.1 319.1 621.3 320.3" fill="none" stroke="#d8d8c8" stroke-width="2" stroke-linecap="round" stroke-linejoin="round" transform="translate(1.4,0.8)" opacity="0.8"/>
<path d="M636.1 305.6 C634.2 305.2 627.8 302.8 625.0 303.0 C622.2 303.2 620.2 305.3 619.4 307.0 C618.6 308.7 619.7 310.8 620.0 313.0 C620.3 315.2 621.1 319.1 621.3 320.3" fill="none" stroke="#0a0a0a" stroke-width="2.7" stroke-linecap="round" stroke-linejoin="round"/>
<path d="M621.3 320.3 C618.6 320.4 608.8 321.1 604.9 320.7 C601.0 320.3 600.0 318.7 598.0 318.0 C596.0 317.3 594.5 316.6 592.6 316.3 C590.7 316.0 587.4 316.1 586.4 316.0" fill="none" stroke="#d8d8c8" stroke-width="2" stroke-linecap="round" stroke-linejoin="round" transform="translate(1.4,0.8)" opacity="0.8"/>
<path d="M621.3 320.3 C618.6 320.4 608.8 321.1 604.9 320.7 C601.0 320.3 600.0 318.7 598.0 318.0 C596.0 317.3 594.5 316.6 592.6 316.3 C590.7 316.0 587.4 316.1 586.4 316.0" fill="none" stroke="#0a0a0a" stroke-width="2.7" stroke-linecap="round" stroke-linejoin="round"/>
<path d="M581.5 280.2 C581.6 281.2 581.2 283.6 582.0 286.4 C582.8 289.2 584.5 294.3 586.1 296.9 C587.7 299.5 590.6 300.1 591.7 302.2 C592.8 304.3 592.5 306.9 592.6 309.3 C592.8 311.7 592.6 315.1 592.6 316.3" fill="none" stroke="#d8d8c8" stroke-width="2" stroke-linecap="round" stroke-linejoin="round" transform="translate(1.4,0.8)" opacity="0.8"/>
<path d="M581.5 280.2 C581.6 281.2 581.2 283.6 582.0 286.4 C582.8 289.2 584.5 294.3 586.1 296.9 C587.7 299.5 590.6 300.1 591.7 302.2 C592.8 304.3 592.5 306.9 592.6 309.3 C592.8 311.7 592.6 315.1 592.6 316.3" fill="none" stroke="#0a0a0a" stroke-width="2.7" stroke-linecap="round" stroke-linejoin="round"/>
<path d="M566.4 315.5 C567.6 314.6 571.4 310.6 573.7 310.0 C576.0 309.4 577.9 311.0 580.0 312.0 C582.1 313.0 585.3 315.3 586.4 316.0" fill="none" stroke="#d8d8c8" stroke-width="2" stroke-linecap="round" stroke-linejoin="round" transform="translate(1.4,0.8)" opacity="0.8"/>
<path d="M566.4 315.5 C567.6 314.6 571.4 310.6 573.7 310.0 C576.0 309.4 577.9 311.0 580.0 312.0 C582.1 313.0 585.3 315.3 586.4 316.0" fill="none" stroke="#0a0a0a" stroke-width="2.7" stroke-linecap="round" stroke-linejoin="round"/>
<path d="M446.7 325.6 C448.3 325.5 452.4 325.8 456.3 325.2 C460.2 324.6 466.3 322.6 470.1 322.2 C473.9 321.8 475.8 321.3 479.3 322.6 C482.8 323.9 487.7 329.3 491.2 330.2 C494.7 331.1 497.4 329.3 500.4 327.9 C503.4 326.5 506.3 323.2 509.2 321.7 C512.1 320.2 515.1 320.0 518.0 319.0 C520.9 318.0 523.6 316.6 526.5 315.9 C529.4 315.2 532.8 315.3 535.6 314.7 C538.4 314.1 540.3 312.7 543.2 312.0 C546.1 311.3 550.7 310.4 553.2 310.3 C555.8 310.2 556.3 310.2 558.5 311.1 C560.7 312.0 565.1 314.8 566.4 315.5" fill="none" stroke="#d8d8c8" stroke-width="2" stroke-linecap="round" stroke-linejoin="round" transform="translate(1.4,0.8)" opacity="0.8"/>
<path d="M446.7 325.6 C448.3 325.5 452.4 325.8 456.3 325.2 C460.2 324.6 466.3 322.6 470.1 322.2 C473.9 321.8 475.8 321.3 479.3 322.6 C482.8 323.9 487.7 329.3 491.2 330.2 C494.7 331.1 497.4 329.3 500.4 327.9 C503.4 326.5 506.3 323.2 509.2 321.7 C512.1 320.2 515.1 320.0 518.0 319.0 C520.9 318.0 523.6 316.6 526.5 315.9 C529.4 315.2 532.8 315.3 535.6 314.7 C538.4 314.1 540.3 312.7 543.2 312.0 C546.1 311.3 550.7 310.4 553.2 310.3 C555.8 310.2 556.3 310.2 558.5 311.1 C560.7 312.0 565.1 314.8 566.4 315.5" fill="none" stroke="#0a0a0a" stroke-width="2.7" stroke-linecap="round" stroke-linejoin="round"/>
<path d="M486.3 360.1 C487.5 360.8 491.0 362.8 493.3 364.0 C495.6 365.2 497.1 366.9 500.4 367.5 C503.7 368.1 509.7 368.7 513.2 367.5 C516.7 366.3 518.6 362.8 521.5 360.4 C524.4 358.0 527.8 355.9 530.3 353.4 C532.8 350.9 535.5 346.8 536.5 345.5" fill="none" stroke="#d8d8c8" stroke-width="2" stroke-linecap="round" stroke-linejoin="round" transform="translate(1.4,0.8)" opacity="0.8"/>
<path d="M486.3 360.1 C487.5 360.8 491.0 362.8 493.3 364.0 C495.6 365.2 497.1 366.9 500.4 367.5 C503.7 368.1 509.7 368.7 513.2 367.5 C516.7 366.3 518.6 362.8 521.5 360.4 C524.4 358.0 527.8 355.9 530.3 353.4 C532.8 350.9 535.5 346.8 536.5 345.5" fill="none" stroke="#0a0a0a" stroke-width="2.7" stroke-linecap="round" stroke-linejoin="round"/>
<path d="M486.3 360.1 C486.8 361.3 488.5 365.1 489.0 367.5 C489.5 369.9 488.6 372.2 489.3 374.5 C490.0 376.8 490.9 379.7 493.0 381.0 C495.1 382.3 498.1 382.6 502.0 382.5 C505.9 382.4 513.8 380.7 516.2 380.3" fill="none" stroke="#d8d8c8" stroke-width="2" stroke-linecap="round" stroke-linejoin="round" transform="translate(1.4,0.8)" opacity="0.8"/>
<path d="M486.3 360.1 C486.8 361.3 488.5 365.1 489.0 367.5 C489.5 369.9 488.6 372.2 489.3 374.5 C490.0 376.8 490.9 379.7 493.0 381.0 C495.1 382.3 498.1 382.6 502.0 382.5 C505.9 382.4 513.8 380.7 516.2 380.3" fill="none" stroke="#0a0a0a" stroke-width="2.7" stroke-linecap="round" stroke-linejoin="round"/>
<path d="M516.2 380.3 C517.4 379.9 521.2 379.2 523.3 378.0 C525.4 376.8 526.9 374.8 528.6 372.8 C530.4 370.8 532.6 368.6 533.8 366.0 C534.9 363.4 535.0 360.4 535.5 357.0 C536.0 353.6 536.3 347.4 536.5 345.5" fill="none" stroke="#d8d8c8" stroke-width="2" stroke-linecap="round" stroke-linejoin="round" transform="translate(1.4,0.8)" opacity="0.8"/>
<path d="M516.2 380.3 C517.4 379.9 521.2 379.2 523.3 378.0 C525.4 376.8 526.9 374.8 528.6 372.8 C530.4 370.8 532.6 368.6 533.8 366.0 C534.9 363.4 535.0 360.4 535.5 357.0 C536.0 353.6 536.3 347.4 536.5 345.5" fill="none" stroke="#0a0a0a" stroke-width="2.7" stroke-linecap="round" stroke-linejoin="round"/>
<path d="M352.0 390.5 C353.3 390.2 357.0 389.1 359.8 388.5 C362.6 387.9 366.3 387.4 368.8 387.0 C371.3 386.6 372.5 387.0 374.7 386.2 C376.9 385.4 380.0 383.9 382.2 382.2 C384.4 380.5 386.9 377.5 388.1 375.8 C389.3 374.1 389.9 373.8 389.6 372.0 C389.3 370.2 386.9 366.4 386.4 365.3" fill="none" stroke="#d8d8c8" stroke-width="2" stroke-linecap="round" stroke-linejoin="round" transform="translate(1.4,0.8)" opacity="0.8"/>
<path d="M352.0 390.5 C353.3 390.2 357.0 389.1 359.8 388.5 C362.6 387.9 366.3 387.4 368.8 387.0 C371.3 386.6 372.5 387.0 374.7 386.2 C376.9 385.4 380.0 383.9 382.2 382.2 C384.4 380.5 386.9 377.5 388.1 375.8 C389.3 374.1 389.9 373.8 389.6 372.0 C389.3 370.2 386.9 366.4 386.4 365.3" fill="none" stroke="#0a0a0a" stroke-width="2.7" stroke-linecap="round" stroke-linejoin="round"/>
<path d="M386.4 365.3 C387.7 365.4 390.7 366.2 394.1 366.0 C397.6 365.8 403.9 364.8 407.1 363.9 C410.3 363.0 411.1 362.4 413.5 360.9 C415.9 359.4 419.9 356.0 421.2 355.0" fill="none" stroke="#d8d8c8" stroke-width="2" stroke-linecap="round" stroke-linejoin="round" transform="translate(1.4,0.8)" opacity="0.8"/>
<path d="M386.4 365.3 C387.7 365.4 390.7 366.2 394.1 366.0 C397.6 365.8 403.9 364.8 407.1 363.9 C410.3 363.0 411.1 362.4 413.5 360.9 C415.9 359.4 419.9 356.0 421.2 355.0" fill="none" stroke="#0a0a0a" stroke-width="2.7" stroke-linecap="round" stroke-linejoin="round"/>
<path d="M389.6 372.0 C390.4 372.9 393.0 375.2 394.1 377.3 C395.2 379.4 395.6 382.2 396.3 384.7 C397.1 387.2 397.9 389.5 398.6 392.2 C399.4 394.9 399.1 398.6 400.8 401.1 C402.5 403.6 406.9 405.0 409.0 407.0 C411.1 409.0 412.2 410.8 413.5 413.0 C414.8 415.2 415.5 418.0 416.5 420.5 C417.5 423.0 419.1 425.6 419.6 428.0 C420.1 430.4 421.0 433.1 419.3 435.2 C417.6 437.3 412.4 439.1 409.2 440.8 C406.0 442.5 402.5 443.8 400.2 445.5 C397.9 447.2 396.4 448.7 395.4 451.2 C394.4 453.7 394.1 457.8 394.0 460.7 C393.9 463.6 394.3 466.4 394.7 468.8 C395.1 471.2 396.1 474.1 396.4 475.2" fill="none" stroke="#d8d8c8" stroke-width="2" stroke-linecap="round" stroke-linejoin="round" transform="translate(1.4,0.8)" opacity="0.8"/>
<path d="M389.6 372.0 C390.4 372.9 393.0 375.2 394.1 377.3 C395.2 379.4 395.6 382.2 396.3 384.7 C397.1 387.2 397.9 389.5 398.6 392.2 C399.4 394.9 399.1 398.6 400.8 401.1 C402.5 403.6 406.9 405.0 409.0 407.0 C411.1 409.0 412.2 410.8 413.5 413.0 C414.8 415.2 415.5 418.0 416.5 420.5 C417.5 423.0 419.1 425.6 419.6 428.0 C420.1 430.4 421.0 433.1 419.3 435.2 C417.6 437.3 412.4 439.1 409.2 440.8 C406.0 442.5 402.5 443.8 400.2 445.5 C397.9 447.2 396.4 448.7 395.4 451.2 C394.4 453.7 394.1 457.8 394.0 460.7 C393.9 463.6 394.3 466.4 394.7 468.8 C395.1 471.2 396.1 474.1 396.4 475.2" fill="none" stroke="#0a0a0a" stroke-width="2.7" stroke-linecap="round" stroke-linejoin="round"/>
<path d="M352.0 390.5 C353.1 391.1 355.8 392.4 358.3 394.4 C360.8 396.4 365.6 400.0 367.0 402.6 C368.4 405.2 366.6 407.8 366.5 410.0 C366.4 412.2 366.2 414.8 366.2 415.7" fill="none" stroke="#d8d8c8" stroke-width="2" stroke-linecap="round" stroke-linejoin="round" transform="translate(1.4,0.8)" opacity="0.8"/>
<path d="M352.0 390.5 C353.1 391.1 355.8 392.4 358.3 394.4 C360.8 396.4 365.6 400.0 367.0 402.6 C368.4 405.2 366.6 407.8 366.5 410.0 C366.4 412.2 366.2 414.8 366.2 415.7" fill="none" stroke="#0a0a0a" stroke-width="2.7" stroke-linecap="round" stroke-linejoin="round"/>
<path d="M4.0 466.0 C5.0 466.3 7.9 467.2 10.0 468.0 C12.1 468.8 13.5 469.4 16.3 470.5 C19.1 471.6 24.1 473.1 27.0 474.5 C29.9 475.9 31.7 477.9 34.0 479.0 C36.3 480.1 39.8 480.7 41.0 481.0" fill="none" stroke="#d8d8c8" stroke-width="2" stroke-linecap="round" stroke-linejoin="round" transform="translate(1.4,0.8)" opacity="0.8"/>
<path d="M4.0 466.0 C5.0 466.3 7.9 467.2 10.0 468.0 C12.1 468.8 13.5 469.4 16.3 470.5 C19.1 471.6 24.1 473.1 27.0 474.5 C29.9 475.9 31.7 477.9 34.0 479.0 C36.3 480.1 39.8 480.7 41.0 481.0" fill="none" stroke="#0a0a0a" stroke-width="2.7" stroke-linecap="round" stroke-linejoin="round"/>
<path d="M619.9 326.0 L607.6 346.2" fill="none" stroke="#5a4030" stroke-width="1.3"/>
<path d="M346.5 394.0 L263.7 429.0 L42.0 481.0" fill="none" stroke="#f4f4f4" stroke-width="1" stroke-linejoin="round" shape-rendering="crispEdges"/>
<path d="M346.5 394.0 L296.3 454.6 L281.3 580.0 L277.0 630.0" fill="none" stroke="#f4f4f4" stroke-width="1" stroke-linejoin="round" shape-rendering="crispEdges"/>
<path d="M346.5 394.0 L337.0 458.6 L365.4 580.0 L398.0 716.0" fill="none" stroke="#f4f4f4" stroke-width="1" stroke-linejoin="round" shape-rendering="crispEdges"/>
<path d="M346.5 394.0 L250.0 337.6 L217.0 317.0 L88.0 172.0" fill="none" stroke="#f4f4f4" stroke-width="1" stroke-linejoin="round" shape-rendering="crispEdges"/>
<path d="M346.5 394.0 L346.3 361.0 L408.6 298.6 L770.0 75.0" fill="none" stroke="#f4f4f4" stroke-width="1" stroke-linejoin="round" shape-rendering="crispEdges"/>
<path d="M346.5 394.0 L347.3 361.5 L411.0 301.0 L487.0 264.7 L566.0 245.8 L580.7 268.8" fill="none" stroke="#f4f4f4" stroke-width="1" stroke-linejoin="round" shape-rendering="crispEdges"/>
<g transform="translate(207,44.7)"><circle r="8.3" fill="#8c8c7c" fill-opacity="0.45" stroke="#33332c" stroke-width="3"/><circle r="8.3" fill="none" stroke="#f6f6f2" stroke-width="1.7"/><text x="0" y="5.3" text-anchor="middle" font-family="Liberation Sans, sans-serif" font-weight="bold" font-size="15" fill="#fff" stroke="#33332c" stroke-width="2.2" paint-order="stroke" stroke-linejoin="round">2</text></g>
<g transform="translate(229.7,137.3)"><circle r="8.3" fill="#8c8c7c" fill-opacity="0.45" stroke="#33332c" stroke-width="3"/><circle r="8.3" fill="none" stroke="#f6f6f2" stroke-width="1.7"/><text x="0" y="5.3" text-anchor="middle" font-family="Liberation Sans, sans-serif" font-weight="bold" font-size="15" fill="#fff" stroke="#33332c" stroke-width="2.2" paint-order="stroke" stroke-linejoin="round">3</text></g>
<g transform="translate(278.3,210.2)"><circle r="8.3" fill="#8c8c7c" fill-opacity="0.45" stroke="#33332c" stroke-width="3"/><circle r="8.3" fill="none" stroke="#f6f6f2" stroke-width="1.7"/><text x="0" y="5.3" text-anchor="middle" font-family="Liberation Sans, sans-serif" font-weight="bold" font-size="15" fill="#fff" stroke="#33332c" stroke-width="2.2" paint-order="stroke" stroke-linejoin="round">2</text></g>
<g transform="translate(319.9,263.4)"><circle r="8.3" fill="#8c8c7c" fill-opacity="0.45" stroke="#33332c" stroke-width="3"/><circle r="8.3" fill="none" stroke="#f6f6f2" stroke-width="1.7"/><text x="0" y="5.3" text-anchor="middle" font-family="Liberation Sans, sans-serif" font-weight="bold" font-size="15" fill="#fff" stroke="#33332c" stroke-width="2.2" paint-order="stroke" stroke-linejoin="round">2</text></g>
<g transform="translate(791.2,56.8)"><circle r="6.3" fill="#8c8c7c" fill-opacity="0.45" stroke="#33332c" stroke-width="2.4"/><circle r="6.3" fill="none" stroke="#f6f6f2" stroke-width="1.3"/><text x="0" y="4.1" text-anchor="middle" font-family="Liberation Sans, sans-serif" font-weight="bold" font-size="11.5" fill="#fff" stroke="#33332c" stroke-width="1.6" paint-order="stroke" stroke-linejoin="round">2</text></g>
<g transform="translate(843.5,66.6)"><circle r="6.3" fill="#8c8c7c" fill-opacity="0.45" stroke="#33332c" stroke-width="2.4"/><circle r="6.3" fill="none" stroke="#f6f6f2" stroke-width="1.3"/><text x="0" y="4.1" text-anchor="middle" font-family="Liberation Sans, sans-serif" font-weight="bold" font-size="11.5" fill="#fff" stroke="#33332c" stroke-width="1.6" paint-order="stroke" stroke-linejoin="round">2</text></g>
<g transform="translate(785.7,97.8)"><circle r="6.3" fill="#8c8c7c" fill-opacity="0.45" stroke="#33332c" stroke-width="2.4"/><circle r="6.3" fill="none" stroke="#f6f6f2" stroke-width="1.3"/><text x="0" y="4.1" text-anchor="middle" font-family="Liberation Sans, sans-serif" font-weight="bold" font-size="11.5" fill="#fff" stroke="#33332c" stroke-width="1.6" paint-order="stroke" stroke-linejoin="round">3</text></g>
<g transform="translate(823.2,127.3)"><circle r="6.3" fill="#8c8c7c" fill-opacity="0.45" stroke="#33332c" stroke-width="2.4"/><circle r="6.3" fill="none" stroke="#f6f6f2" stroke-width="1.3"/><text x="0" y="4.1" text-anchor="middle" font-family="Liberation Sans, sans-serif" font-weight="bold" font-size="11.5" fill="#fff" stroke="#33332c" stroke-width="1.6" paint-order="stroke" stroke-linejoin="round">2</text></g>
<g transform="translate(760.8,139)"><circle r="6.3" fill="#8c8c7c" fill-opacity="0.45" stroke="#33332c" stroke-width="2.4"/><circle r="6.3" fill="none" stroke="#f6f6f2" stroke-width="1.3"/><text x="0" y="4.1" text-anchor="middle" font-family="Liberation Sans, sans-serif" font-weight="bold" font-size="11.5" fill="#fff" stroke="#33332c" stroke-width="1.6" paint-order="stroke" stroke-linejoin="round">2</text></g>
<g transform="translate(809.9,172.2)"><circle r="6.3" fill="#8c8c7c" fill-opacity="0.45" stroke="#33332c" stroke-width="2.4"/><circle r="6.3" fill="none" stroke="#f6f6f2" stroke-width="1.3"/><text x="0" y="4.1" text-anchor="middle" font-family="Liberation Sans, sans-serif" font-weight="bold" font-size="11.5" fill="#fff" stroke="#33332c" stroke-width="1.6" paint-order="stroke" stroke-linejoin="round">1</text></g>
<g transform="translate(745.9,176.2)"><circle r="6.3" fill="#8c8c7c" fill-opacity="0.45" stroke="#33332c" stroke-width="2.4"/><circle r="6.3" fill="none" stroke="#f6f6f2" stroke-width="1.3"/><text x="0" y="4.1" text-anchor="middle" font-family="Liberation Sans, sans-serif" font-weight="bold" font-size="11.5" fill="#fff" stroke="#33332c" stroke-width="1.6" paint-order="stroke" stroke-linejoin="round">3</text></g>
<g transform="translate(793.3,196.6)"><circle r="6.3" fill="#8c8c7c" fill-opacity="0.45" stroke="#33332c" stroke-width="2.4"/><circle r="6.3" fill="none" stroke="#f6f6f2" stroke-width="1.3"/><text x="0" y="4.1" text-anchor="middle" font-family="Liberation Sans, sans-serif" font-weight="bold" font-size="11.5" fill="#fff" stroke="#33332c" stroke-width="1.6" paint-order="stroke" stroke-linejoin="round">1</text></g>
<g transform="translate(765.8,200)"><circle r="6.3" fill="#8c8c7c" fill-opacity="0.45" stroke="#33332c" stroke-width="2.4"/><circle r="6.3" fill="none" stroke="#f6f6f2" stroke-width="1.3"/><text x="0" y="4.1" text-anchor="middle" font-family="Liberation Sans, sans-serif" font-weight="bold" font-size="11.5" fill="#fff" stroke="#33332c" stroke-width="1.6" paint-order="stroke" stroke-linejoin="round">3</text></g>
<g transform="translate(701,201.8)"><circle r="6.3" fill="#8c8c7c" fill-opacity="0.45" stroke="#33332c" stroke-width="2.4"/><circle r="6.3" fill="none" stroke="#f6f6f2" stroke-width="1.3"/><text x="0" y="4.1" text-anchor="middle" font-family="Liberation Sans, sans-serif" font-weight="bold" font-size="11.5" fill="#fff" stroke="#33332c" stroke-width="1.6" paint-order="stroke" stroke-linejoin="round">2</text></g>
<g transform="translate(772.2,227.7)"><circle r="6.3" fill="#8c8c7c" fill-opacity="0.45" stroke="#33332c" stroke-width="2.4"/><circle r="6.3" fill="none" stroke="#f6f6f2" stroke-width="1.3"/><text x="0" y="4.1" text-anchor="middle" font-family="Liberation Sans, sans-serif" font-weight="bold" font-size="11.5" fill="#fff" stroke="#33332c" stroke-width="1.6" paint-order="stroke" stroke-linejoin="round">1</text></g>
<g transform="translate(683.8,231.4)"><circle r="6.3" fill="#8c8c7c" fill-opacity="0.45" stroke="#33332c" stroke-width="2.4"/><circle r="6.3" fill="none" stroke="#f6f6f2" stroke-width="1.3"/><text x="0" y="4.1" text-anchor="middle" font-family="Liberation Sans, sans-serif" font-weight="bold" font-size="11.5" fill="#fff" stroke="#33332c" stroke-width="1.6" paint-order="stroke" stroke-linejoin="round">2</text></g>
<g transform="translate(720,246.2)"><circle r="6.3" fill="#8c8c7c" fill-opacity="0.45" stroke="#33332c" stroke-width="2.4"/><circle r="6.3" fill="none" stroke="#f6f6f2" stroke-width="1.3"/><text x="0" y="4.1" text-anchor="middle" font-family="Liberation Sans, sans-serif" font-weight="bold" font-size="11.5" fill="#fff" stroke="#33332c" stroke-width="1.6" paint-order="stroke" stroke-linejoin="round">2</text></g>
<g transform="translate(783.6,242.2)"><circle r="6.3" fill="#8c8c7c" fill-opacity="0.45" stroke="#33332c" stroke-width="2.4"/><circle r="6.3" fill="none" stroke="#f6f6f2" stroke-width="1.3"/><text x="0" y="4.1" text-anchor="middle" font-family="Liberation Sans, sans-serif" font-weight="bold" font-size="11.5" fill="#fff" stroke="#33332c" stroke-width="1.6" paint-order="stroke" stroke-linejoin="round">1</text></g>
<g transform="translate(812,246)"><circle r="6.3" fill="#8c8c7c" fill-opacity="0.45" stroke="#33332c" stroke-width="2.4"/><circle r="6.3" fill="none" stroke="#f6f6f2" stroke-width="1.3"/><text x="0" y="4.1" text-anchor="middle" font-family="Liberation Sans, sans-serif" font-weight="bold" font-size="11.5" fill="#fff" stroke="#33332c" stroke-width="1.6" paint-order="stroke" stroke-linejoin="round">1</text></g>
<g transform="translate(751.2,254.1)"><circle r="6.3" fill="#8c8c7c" fill-opacity="0.45" stroke="#33332c" stroke-width="2.4"/><circle r="6.3" fill="none" stroke="#f6f6f2" stroke-width="1.3"/><text x="0" y="4.1" text-anchor="middle" font-family="Liberation Sans, sans-serif" font-weight="bold" font-size="11.5" fill="#fff" stroke="#33332c" stroke-width="1.6" paint-order="stroke" stroke-linejoin="round">1</text></g>
<g transform="translate(766.2,265.2)"><circle r="6.3" fill="#8c8c7c" fill-opacity="0.45" stroke="#33332c" stroke-width="2.4"/><circle r="6.3" fill="none" stroke="#f6f6f2" stroke-width="1.3"/><text x="0" y="4.1" text-anchor="middle" font-family="Liberation Sans, sans-serif" font-weight="bold" font-size="11.5" fill="#fff" stroke="#33332c" stroke-width="1.6" paint-order="stroke" stroke-linejoin="round">1</text></g>
<g transform="translate(728.2,276.8)"><circle r="6.3" fill="#8c8c7c" fill-opacity="0.45" stroke="#33332c" stroke-width="2.4"/><circle r="6.3" fill="none" stroke="#f6f6f2" stroke-width="1.3"/><text x="0" y="4.1" text-anchor="middle" font-family="Liberation Sans, sans-serif" font-weight="bold" font-size="11.5" fill="#fff" stroke="#33332c" stroke-width="1.6" paint-order="stroke" stroke-linejoin="round">1</text></g>
<g transform="translate(694,303.7)"><circle r="6.3" fill="#8c8c7c" fill-opacity="0.45" stroke="#33332c" stroke-width="2.4"/><circle r="6.3" fill="none" stroke="#f6f6f2" stroke-width="1.3"/><text x="0" y="4.1" text-anchor="middle" font-family="Liberation Sans, sans-serif" font-weight="bold" font-size="11.5" fill="#fff" stroke="#33332c" stroke-width="1.6" paint-order="stroke" stroke-linejoin="round">1</text></g>
<g transform="translate(622.3,246.1)"><circle r="6.3" fill="#8c8c7c" fill-opacity="0.45" stroke="#33332c" stroke-width="2.4"/><circle r="6.3" fill="none" stroke="#f6f6f2" stroke-width="1.3"/><text x="0" y="4.1" text-anchor="middle" font-family="Liberation Sans, sans-serif" font-weight="bold" font-size="11.5" fill="#fff" stroke="#33332c" stroke-width="1.6" paint-order="stroke" stroke-linejoin="round">2</text></g>
<g transform="translate(673.4,314)"><circle r="6.3" fill="#8c8c7c" fill-opacity="0.45" stroke="#33332c" stroke-width="2.4"/><circle r="6.3" fill="none" stroke="#f6f6f2" stroke-width="1.3"/><text x="0" y="4.1" text-anchor="middle" font-family="Liberation Sans, sans-serif" font-weight="bold" font-size="11.5" fill="#fff" stroke="#33332c" stroke-width="1.6" paint-order="stroke" stroke-linejoin="round">1</text></g>
<g transform="translate(650.9,309.1)"><circle r="6.3" fill="#8c8c7c" fill-opacity="0.45" stroke="#33332c" stroke-width="2.4"/><circle r="6.3" fill="none" stroke="#f6f6f2" stroke-width="1.3"/><text x="0" y="4.1" text-anchor="middle" font-family="Liberation Sans, sans-serif" font-weight="bold" font-size="11.5" fill="#fff" stroke="#33332c" stroke-width="1.6" paint-order="stroke" stroke-linejoin="round">1</text></g>
<g transform="translate(640.8,293.5)"><circle r="6.3" fill="#8c8c7c" fill-opacity="0.45" stroke="#33332c" stroke-width="2.4"/><circle r="6.3" fill="none" stroke="#f6f6f2" stroke-width="1.3"/><text x="0" y="4.1" text-anchor="middle" font-family="Liberation Sans, sans-serif" font-weight="bold" font-size="11.5" fill="#fff" stroke="#33332c" stroke-width="1.6" paint-order="stroke" stroke-linejoin="round">1</text></g>
<g transform="translate(619,306.8)"><circle r="6.3" fill="#8c8c7c" fill-opacity="0.45" stroke="#33332c" stroke-width="2.4"/><circle r="6.3" fill="none" stroke="#f6f6f2" stroke-width="1.3"/><text x="0" y="4.1" text-anchor="middle" font-family="Liberation Sans, sans-serif" font-weight="bold" font-size="11.5" fill="#fff" stroke="#33332c" stroke-width="1.6" paint-order="stroke" stroke-linejoin="round">1</text></g>
<g transform="translate(605.2,320.5)"><circle r="6.3" fill="#8c8c7c" fill-opacity="0.45" stroke="#33332c" stroke-width="2.4"/><circle r="6.3" fill="none" stroke="#f6f6f2" stroke-width="1.3"/><text x="0" y="4.1" text-anchor="middle" font-family="Liberation Sans, sans-serif" font-weight="bold" font-size="11.5" fill="#fff" stroke="#33332c" stroke-width="1.6" paint-order="stroke" stroke-linejoin="round">1</text></g>
<g transform="translate(585.8,297.2)"><circle r="6.3" fill="#8c8c7c" fill-opacity="0.45" stroke="#33332c" stroke-width="2.4"/><circle r="6.3" fill="none" stroke="#f6f6f2" stroke-width="1.3"/><text x="0" y="4.1" text-anchor="middle" font-family="Liberation Sans, sans-serif" font-weight="bold" font-size="11.5" fill="#fff" stroke="#33332c" stroke-width="1.6" paint-order="stroke" stroke-linejoin="round">2</text></g>
<g transform="translate(574,310)"><circle r="6.3" fill="#8c8c7c" fill-opacity="0.45" stroke="#33332c" stroke-width="2.4"/><circle r="6.3" fill="none" stroke="#f6f6f2" stroke-width="1.3"/><text x="0" y="4.1" text-anchor="middle" font-family="Liberation Sans, sans-serif" font-weight="bold" font-size="11.5" fill="#fff" stroke="#33332c" stroke-width="1.6" paint-order="stroke" stroke-linejoin="round">1</text></g>
<g transform="translate(542.9,311.9)"><circle r="6.3" fill="#8c8c7c" fill-opacity="0.45" stroke="#33332c" stroke-width="2.4"/><circle r="6.3" fill="none" stroke="#f6f6f2" stroke-width="1.3"/><text x="0" y="4.1" text-anchor="middle" font-family="Liberation Sans, sans-serif" font-weight="bold" font-size="11.5" fill="#fff" stroke="#33332c" stroke-width="1.6" paint-order="stroke" stroke-linejoin="round">1</text></g>
<g transform="translate(509,321.5)"><circle r="6.3" fill="#8c8c7c" fill-opacity="0.45" stroke="#33332c" stroke-width="2.4"/><circle r="6.3" fill="none" stroke="#f6f6f2" stroke-width="1.3"/><text x="0" y="4.1" text-anchor="middle" font-family="Liberation Sans, sans-serif" font-weight="bold" font-size="11.5" fill="#fff" stroke="#33332c" stroke-width="1.6" paint-order="stroke" stroke-linejoin="round">1</text></g>
<g transform="translate(470.2,321.5)"><circle r="6.3" fill="#8c8c7c" fill-opacity="0.45" stroke="#33332c" stroke-width="2.4"/><circle r="6.3" fill="none" stroke="#f6f6f2" stroke-width="1.3"/><text x="0" y="4.1" text-anchor="middle" font-family="Liberation Sans, sans-serif" font-weight="bold" font-size="11.5" fill="#fff" stroke="#33332c" stroke-width="1.6" paint-order="stroke" stroke-linejoin="round">1</text></g>
<g transform="translate(513,367.6)"><circle r="6.3" fill="#8c8c7c" fill-opacity="0.45" stroke="#33332c" stroke-width="2.4"/><circle r="6.3" fill="none" stroke="#f6f6f2" stroke-width="1.3"/><text x="0" y="4.1" text-anchor="middle" font-family="Liberation Sans, sans-serif" font-weight="bold" font-size="11.5" fill="#fff" stroke="#33332c" stroke-width="1.6" paint-order="stroke" stroke-linejoin="round">2</text></g>
<g transform="translate(540.2,376.8)"><circle r="6.3" fill="#8c8c7c" fill-opacity="0.45" stroke="#33332c" stroke-width="2.4"/><circle r="6.3" fill="none" stroke="#f6f6f2" stroke-width="1.3"/><text x="0" y="4.1" text-anchor="middle" font-family="Liberation Sans, sans-serif" font-weight="bold" font-size="11.5" fill="#fff" stroke="#33332c" stroke-width="1.6" paint-order="stroke" stroke-linejoin="round">2</text></g>
<g transform="translate(493.2,393.1)"><circle r="6.3" fill="#8c8c7c" fill-opacity="0.45" stroke="#33332c" stroke-width="2.4"/><circle r="6.3" fill="none" stroke="#f6f6f2" stroke-width="1.3"/><text x="0" y="4.1" text-anchor="middle" font-family="Liberation Sans, sans-serif" font-weight="bold" font-size="11.5" fill="#fff" stroke="#33332c" stroke-width="1.6" paint-order="stroke" stroke-linejoin="round">2</text></g>
<g transform="translate(407,364.3)"><circle r="6.3" fill="#8c8c7c" fill-opacity="0.45" stroke="#33332c" stroke-width="2.4"/><circle r="6.3" fill="none" stroke="#f6f6f2" stroke-width="1.3"/><text x="0" y="4.1" text-anchor="middle" font-family="Liberation Sans, sans-serif" font-weight="bold" font-size="11.5" fill="#fff" stroke="#33332c" stroke-width="1.6" paint-order="stroke" stroke-linejoin="round">2</text></g>
<g transform="translate(381.9,381.3)"><circle r="6.3" fill="#8c8c7c" fill-opacity="0.45" stroke="#33332c" stroke-width="2.4"/><circle r="6.3" fill="none" stroke="#f6f6f2" stroke-width="1.3"/><text x="0" y="4.1" text-anchor="middle" font-family="Liberation Sans, sans-serif" font-weight="bold" font-size="11.5" fill="#fff" stroke="#33332c" stroke-width="1.6" paint-order="stroke" stroke-linejoin="round">2</text></g>
<g transform="translate(367.2,402.5)"><circle r="6.3" fill="#8c8c7c" fill-opacity="0.45" stroke="#33332c" stroke-width="2.4"/><circle r="6.3" fill="none" stroke="#f6f6f2" stroke-width="1.3"/><text x="0" y="4.1" text-anchor="middle" font-family="Liberation Sans, sans-serif" font-weight="bold" font-size="11.5" fill="#fff" stroke="#33332c" stroke-width="1.6" paint-order="stroke" stroke-linejoin="round">2</text></g>
<g transform="translate(401,401.4)"><circle r="6.3" fill="#8c8c7c" fill-opacity="0.45" stroke="#33332c" stroke-width="2.4"/><circle r="6.3" fill="none" stroke="#f6f6f2" stroke-width="1.3"/><text x="0" y="4.1" text-anchor="middle" font-family="Liberation Sans, sans-serif" font-weight="bold" font-size="11.5" fill="#fff" stroke="#33332c" stroke-width="1.6" paint-order="stroke" stroke-linejoin="round">2</text></g>
<g transform="translate(409.3,440.5)"><circle r="6.3" fill="#8c8c7c" fill-opacity="0.45" stroke="#33332c" stroke-width="2.4"/><circle r="6.3" fill="none" stroke="#f6f6f2" stroke-width="1.3"/><text x="0" y="4.1" text-anchor="middle" font-family="Liberation Sans, sans-serif" font-weight="bold" font-size="11.5" fill="#fff" stroke="#33332c" stroke-width="1.6" paint-order="stroke" stroke-linejoin="round">2</text></g>
<use href="#mp" x="222" y="96"/>
<use href="#mk" x="267" y="170"/>
<use href="#mk" x="286" y="246"/>
<use href="#mk" x="342" y="300"/>
<use href="#mk" x="42" y="481"/>
<use href="#mk" x="277" y="630"/>
<use href="#mk" x="861" y="576"/>
<use href="#mk" x="837" y="651"/>
<use href="#mk" x="36" y="714"/>
<use href="#mk" x="772" y="75"/>
<use href="#mp" x="842" y="110"/>
<use href="#mp" x="782" y="136"/>
<use href="#mp" x="816" y="145"/>
<use href="#mp" x="732" y="162"/>
<use href="#mp" x="797" y="180"/>
<use href="#mp" x="757" y="186"/>
<use href="#mp" x="782" y="211"/>
<use href="#mp" x="702" y="236"/>
<use href="#mp" x="766" y="246"/>
<use href="#mp" x="796" y="240"/>
<use href="#mk" x="822" y="250"/>
<use href="#mp" x="736" y="261"/>
<use href="#mp" x="776" y="276"/>
<use href="#mp" x="711" y="296"/>
<use href="#mp" x="682" y="321"/>
<use href="#mp" x="661" y="220"/>
<use href="#mp" x="661" y="310"/>
<use href="#mp" x="636" y="280"/>
<use href="#mp" x="636" y="306"/>
<use href="#mp" x="622" y="320"/>
<use href="#mp" x="586" y="316"/>
<use href="#mp" x="581" y="280"/>
<use href="#mp" x="566" y="316"/>
<use href="#mp" x="526" y="316"/>
<use href="#mp" x="491" y="330"/>
<use href="#mp" x="446" y="326"/>
<use href="#mk" x="536" y="345"/>
<use href="#mk" x="486" y="360"/>
<use href="#mk" x="516" y="380"/>
<use href="#mp" x="421" y="355"/>
<use href="#mp" x="386" y="366"/>
<use href="#mp" x="352" y="390"/>
<use href="#mp" x="366" y="416"/>
<use href="#mp" x="416" y="420"/>
<use href="#mk" x="396" y="475"/>
<g transform="translate(210.8,425)"><circle r="9.9" fill="#000"/><circle r="8.1" fill="#fff"/><circle r="6" fill="#000"/><circle r="5" fill="#0000ff"/><text x="0" y="3.9" text-anchor="middle" font-family="Liberation Sans, sans-serif" font-weight="bold" font-size="11" fill="#c4ffff">S</text></g>
<g transform="translate(166.3,655)"><circle r="9.9" fill="#000"/><circle r="8.1" fill="#fff"/><circle r="6" fill="#000"/><circle r="5" fill="#0000ff"/><text x="0" y="3.9" text-anchor="middle" font-family="Liberation Sans, sans-serif" font-weight="bold" font-size="11" fill="#c4ffff">T</text></g>
<text transform="translate(236,101.26) scale(0.828,1)" font-family="Liberation Sans, Noto Sans CJK JP, sans-serif" font-weight="bold" font-size="14.5" fill="#3f2f27" stroke="#b9a98f" stroke-opacity="0.8" stroke-width="2.8" paint-order="stroke" stroke-linejoin="round" filter="none">ピョンヤン</text>
<text transform="translate(281,173.26) scale(0.851,1)" font-family="Liberation Sans, Noto Sans CJK JP, sans-serif" font-weight="bold" font-size="14.5" fill="#3f2f27" stroke="#b9a98f" stroke-opacity="0.8" stroke-width="2.8" paint-order="stroke" stroke-linejoin="round" filter="none">ソウル</text>
<text transform="translate(291,233.26) scale(0.845,1)" font-family="Liberation Sans, Noto Sans CJK JP, sans-serif" font-weight="bold" font-size="14.5" fill="#3f2f27" stroke="#b9a98f" stroke-opacity="0.8" stroke-width="2.8" paint-order="stroke" stroke-linejoin="round" filter="none">テジョン</text>
<text transform="translate(288,298.26) scale(0.874,1)" font-family="Liberation Sans, Noto Sans CJK JP, sans-serif" font-weight="bold" font-size="14.5" fill="#3f2f27" stroke="#b9a98f" stroke-opacity="0.8" stroke-width="2.8" paint-order="stroke" stroke-linejoin="round" filter="none">プサン</text>
<text transform="translate(315,374.32) scale(1,1)" font-family="Liberation Sans, Noto Sans CJK JP, sans-serif" font-weight="bold" font-size="14" fill="#3f2f27" stroke="#b9a98f" stroke-opacity="0.8" stroke-width="2.8" paint-order="stroke" stroke-linejoin="round" filter="none">佐世保</text>
<text transform="translate(397,383.32) scale(1,1)" font-family="Liberation Sans, Noto Sans CJK JP, sans-serif" font-weight="bold" font-size="14" fill="#3f2f27" stroke="#b9a98f" stroke-opacity="0.8" stroke-width="2.8" paint-order="stroke" stroke-linejoin="round" filter="none">福岡</text>
<text transform="translate(435,358.32) scale(1,1)" font-family="Liberation Sans, Noto Sans CJK JP, sans-serif" font-weight="bold" font-size="14" fill="#3f2f27" stroke="#b9a98f" stroke-opacity="0.8" stroke-width="2.8" paint-order="stroke" stroke-linejoin="round" filter="none">八幡</text>
<text transform="translate(420,408.32) scale(1,1)" font-family="Liberation Sans, Noto Sans CJK JP, sans-serif" font-weight="bold" font-size="14" fill="#3f2f27" stroke="#b9a98f" stroke-opacity="0.8" stroke-width="2.8" paint-order="stroke" stroke-linejoin="round" filter="none">熊本</text>
<text transform="translate(344,440.32) scale(1,1)" font-family="Liberation Sans, Noto Sans CJK JP, sans-serif" font-weight="bold" font-size="14" fill="#3f2f27" stroke="#b9a98f" stroke-opacity="0.8" stroke-width="2.8" paint-order="stroke" stroke-linejoin="round" filter="none">大村</text>
<text transform="translate(396,463.32) scale(1,1)" font-family="Liberation Sans, Noto Sans CJK JP, sans-serif" font-weight="bold" font-size="14" fill="#3f2f27" stroke="#b9a98f" stroke-opacity="0.8" stroke-width="2.8" paint-order="stroke" stroke-linejoin="round" filter="none">鹿児島</text>
<text transform="translate(437,312.32) scale(1,1)" font-family="Liberation Sans, Noto Sans CJK JP, sans-serif" font-weight="bold" font-size="14" fill="#3f2f27" stroke="#b9a98f" stroke-opacity="0.8" stroke-width="2.8" paint-order="stroke" stroke-linejoin="round" filter="none">山口</text>
<text transform="translate(487,318.32) scale(1,1)" font-family="Liberation Sans, Noto Sans CJK JP, sans-serif" font-weight="bold" font-size="14" fill="#3f2f27" stroke="#b9a98f" stroke-opacity="0.8" stroke-width="2.8" paint-order="stroke" stroke-linejoin="round" filter="none">呉</text>
<text transform="translate(511,304.32) scale(1,1)" font-family="Liberation Sans, Noto Sans CJK JP, sans-serif" font-weight="bold" font-size="14" fill="#3f2f27" stroke="#b9a98f" stroke-opacity="0.8" stroke-width="2.8" paint-order="stroke" stroke-linejoin="round" filter="none">岡山</text>
<text transform="translate(549,304.32) scale(1,1)" font-family="Liberation Sans, Noto Sans CJK JP, sans-serif" font-weight="bold" font-size="14" fill="#3f2f27" stroke="#b9a98f" stroke-opacity="0.8" stroke-width="2.8" paint-order="stroke" stroke-linejoin="round" filter="none">神戸</text>
<text transform="translate(594,303.82) scale(0.81,1)" font-family="Liberation Sans, Noto Sans CJK JP, sans-serif" font-weight="bold" font-size="14" fill="#3f2f27" stroke="#b9a98f" stroke-opacity="0.8" stroke-width="2.8" paint-order="stroke" stroke-linejoin="round" filter="none">名古屋</text>
<text transform="translate(571,264.32) scale(1.036,1)" font-family="Liberation Sans, Noto Sans CJK JP, sans-serif" font-weight="bold" font-size="14" fill="#3f2f27" stroke="#b9a98f" stroke-opacity="0.8" stroke-width="2.8" paint-order="stroke" stroke-linejoin="round" filter="none">舞鶴</text>
<text transform="translate(576,340.32) scale(1,1)" font-family="Liberation Sans, Noto Sans CJK JP, sans-serif" font-weight="bold" font-size="14" fill="#3f2f27" stroke="#b9a98f" stroke-opacity="0.8" stroke-width="2.8" paint-order="stroke" stroke-linejoin="round" filter="none">大阪</text>
<text transform="translate(575.5,360.82) scale(1,1)" font-family="Liberation Sans, Noto Sans CJK JP, sans-serif" font-weight="bold" font-size="14" fill="#3f2f27" stroke="#b9a98f" stroke-opacity="0.8" stroke-width="2.8" paint-order="stroke" stroke-linejoin="round" filter="none">四日市</text>
<text transform="translate(475,383.32) scale(1,1)" font-family="Liberation Sans, Noto Sans CJK JP, sans-serif" font-weight="bold" font-size="14" fill="#3f2f27" stroke="#b9a98f" stroke-opacity="0.8" stroke-width="2.8" paint-order="stroke" stroke-linejoin="round" filter="none">松山</text>
<text transform="translate(524,367.32) scale(1.036,1)" font-family="Liberation Sans, Noto Sans CJK JP, sans-serif" font-weight="bold" font-size="14" fill="#3f2f27" stroke="#b9a98f" stroke-opacity="0.8" stroke-width="2.8" paint-order="stroke" stroke-linejoin="round" filter="none">高松</text>
<text transform="translate(508,406.32) scale(1,1)" font-family="Liberation Sans, Noto Sans CJK JP, sans-serif" font-weight="bold" font-size="14" fill="#3f2f27" stroke="#b9a98f" stroke-opacity="0.8" stroke-width="2.8" paint-order="stroke" stroke-linejoin="round" filter="none">高知</text>
<text transform="translate(646,244.32) scale(1,1)" font-family="Liberation Sans, Noto Sans CJK JP, sans-serif" font-weight="bold" font-size="14" fill="#3f2f27" stroke="#b9a98f" stroke-opacity="0.8" stroke-width="2.8" paint-order="stroke" stroke-linejoin="round" filter="none">富山</text>
<text transform="translate(628,268.32) scale(1,1)" font-family="Liberation Sans, Noto Sans CJK JP, sans-serif" font-weight="bold" font-size="14" fill="#3f2f27" stroke="#b9a98f" stroke-opacity="0.8" stroke-width="2.8" paint-order="stroke" stroke-linejoin="round" filter="none">岐阜</text>
<text transform="translate(654,299.32) scale(1,1)" font-family="Liberation Sans, Noto Sans CJK JP, sans-serif" font-weight="bold" font-size="14" fill="#3f2f27" stroke="#b9a98f" stroke-opacity="0.8" stroke-width="2.8" paint-order="stroke" stroke-linejoin="round" filter="none">豊川</text>
<text transform="translate(672,344.32) scale(1,1)" font-family="Liberation Sans, Noto Sans CJK JP, sans-serif" font-weight="bold" font-size="14" fill="#3f2f27" stroke="#b9a98f" stroke-opacity="0.8" stroke-width="2.8" paint-order="stroke" stroke-linejoin="round" filter="none">浜松</text>
<text transform="translate(692,223.32) scale(1,1)" font-family="Liberation Sans, Noto Sans CJK JP, sans-serif" font-weight="bold" font-size="14" fill="#3f2f27" stroke="#b9a98f" stroke-opacity="0.8" stroke-width="2.8" paint-order="stroke" stroke-linejoin="round" filter="none">長野</text>
<text transform="translate(686,265.32) scale(1,1)" font-family="Liberation Sans, Noto Sans CJK JP, sans-serif" font-weight="bold" font-size="14" fill="#3f2f27" stroke="#b9a98f" stroke-opacity="0.8" stroke-width="2.8" paint-order="stroke" stroke-linejoin="round" filter="none">相模原</text>
<text transform="translate(691,283.32) scale(1,1)" font-family="Liberation Sans, Noto Sans CJK JP, sans-serif" font-weight="bold" font-size="14" fill="#3f2f27" stroke="#b9a98f" stroke-opacity="0.8" stroke-width="2.8" paint-order="stroke" stroke-linejoin="round" filter="none">静岡</text>
<text transform="translate(731,244.32) scale(1,1)" font-family="Liberation Sans, Noto Sans CJK JP, sans-serif" font-weight="bold" font-size="14" fill="#3f2f27" stroke="#b9a98f" stroke-opacity="0.8" stroke-width="2.8" paint-order="stroke" stroke-linejoin="round" filter="none">東京</text>
<text transform="translate(720,196.32) scale(1,1)" font-family="Liberation Sans, Noto Sans CJK JP, sans-serif" font-weight="bold" font-size="14" fill="#3f2f27" stroke="#b9a98f" stroke-opacity="0.8" stroke-width="2.8" paint-order="stroke" stroke-linejoin="round" filter="none">前橋</text>
<text transform="translate(743,220.32) scale(1,1)" font-family="Liberation Sans, Noto Sans CJK JP, sans-serif" font-weight="bold" font-size="14" fill="#3f2f27" stroke="#b9a98f" stroke-opacity="0.8" stroke-width="2.8" paint-order="stroke" stroke-linejoin="round" filter="none">大宮</text>
<text transform="translate(707,147.82) scale(0.964,1)" font-family="Liberation Sans, Noto Sans CJK JP, sans-serif" font-weight="bold" font-size="14" fill="#3f2f27" stroke="#b9a98f" stroke-opacity="0.8" stroke-width="2.8" paint-order="stroke" stroke-linejoin="round" filter="none">新潟</text>
<text transform="translate(762,123.32) scale(1,1)" font-family="Liberation Sans, Noto Sans CJK JP, sans-serif" font-weight="bold" font-size="14" fill="#3f2f27" stroke="#b9a98f" stroke-opacity="0.8" stroke-width="2.8" paint-order="stroke" stroke-linejoin="round" filter="none">山形</text>
<text transform="translate(784,83.32) scale(1.036,1)" font-family="Liberation Sans, Noto Sans CJK JP, sans-serif" font-weight="bold" font-size="14" fill="#3f2f27" stroke="#b9a98f" stroke-opacity="0.8" stroke-width="2.8" paint-order="stroke" stroke-linejoin="round" filter="none">秋田</text>
<text transform="translate(781,160.32) scale(1,1)" font-family="Liberation Sans, Noto Sans CJK JP, sans-serif" font-weight="bold" font-size="14" fill="#3f2f27" stroke="#b9a98f" stroke-opacity="0.8" stroke-width="2.8" paint-order="stroke" stroke-linejoin="round" filter="none">仙台</text>
<text transform="translate(856,118.32) scale(1,1)" font-family="Liberation Sans, Noto Sans CJK JP, sans-serif" font-weight="bold" font-size="14" fill="#3f2f27" stroke="#b9a98f" stroke-opacity="0.8" stroke-width="2.8" paint-order="stroke" stroke-linejoin="round" filter="none">釜石</text>
<text transform="translate(808,193.32) scale(1,1)" font-family="Liberation Sans, Noto Sans CJK JP, sans-serif" font-weight="bold" font-size="14" fill="#3f2f27" stroke="#b9a98f" stroke-opacity="0.8" stroke-width="2.8" paint-order="stroke" stroke-linejoin="round" filter="none">宇都宮</text>
<text transform="translate(796,229.32) scale(1,1)" font-family="Liberation Sans, Noto Sans CJK JP, sans-serif" font-weight="bold" font-size="14" fill="#3f2f27" stroke="#b9a98f" stroke-opacity="0.8" stroke-width="2.8" paint-order="stroke" stroke-linejoin="round" filter="none">船橋</text>
<text transform="translate(834,255.32) scale(1,1)" font-family="Liberation Sans, Noto Sans CJK JP, sans-serif" font-weight="bold" font-size="14" fill="#3f2f27" stroke="#b9a98f" stroke-opacity="0.8" stroke-width="2.8" paint-order="stroke" stroke-linejoin="round" filter="none">九十九里</text>
<text transform="translate(792,277.32) scale(1,1)" font-family="Liberation Sans, Noto Sans CJK JP, sans-serif" font-weight="bold" font-size="14" fill="#3f2f27" stroke="#b9a98f" stroke-opacity="0.8" stroke-width="2.8" paint-order="stroke" stroke-linejoin="round" filter="none">横須賀</text>
<text transform="translate(58,487.96) scale(1.029,1)" font-family="Liberation Sans, Noto Sans CJK JP, sans-serif" font-weight="bold" font-size="17" fill="#3f2f27" stroke="#b9a98f" stroke-opacity="0.8" stroke-width="2.8" paint-order="stroke" stroke-linejoin="round" filter="none">上海</text>
<text transform="translate(292,638.96) scale(1,1)" font-family="Liberation Sans, Noto Sans CJK JP, sans-serif" font-weight="bold" font-size="17" fill="#3f2f27" stroke="#b9a98f" stroke-opacity="0.8" stroke-width="2.8" paint-order="stroke" stroke-linejoin="round" filter="none">沖縄</text>
<text transform="translate(29,699.96) scale(0.971,1)" font-family="Liberation Sans, Noto Sans CJK JP, sans-serif" font-weight="bold" font-size="17" fill="#3f2f27" stroke="#b9a98f" stroke-opacity="0.8" stroke-width="2.8" paint-order="stroke" stroke-linejoin="round" filter="none">台北</text>
<text transform="translate(877,581.96) scale(0.971,1)" font-family="Liberation Sans, Noto Sans CJK JP, sans-serif" font-weight="bold" font-size="17" fill="#3f2f27" stroke="#b9a98f" stroke-opacity="0.8" stroke-width="2.8" paint-order="stroke" stroke-linejoin="round" filter="none">父島</text>
<text transform="translate(852,658.96) scale(1,1)" font-family="Liberation Sans, Noto Sans CJK JP, sans-serif" font-weight="bold" font-size="17" fill="#3f2f27" stroke="#b9a98f" stroke-opacity="0.8" stroke-width="2.8" paint-order="stroke" stroke-linejoin="round" filter="none">硫黄島</text>
</svg>
 </div>
 <!-- vertical scrollbar -->
 <div class="abs track" style="left:1012px;top:44px;width:16px;height:672px"></div>
 <div class="btn3d" style="left:1012px;top:44px;width:16px;height:16px"><svg width="16" height="16" class="abs" style="left:0;top:0"><path d="M4 9.5H11L7.5 6Z" fill="#000"/></svg></div>
 <div class="btn3d" style="left:1012px;top:700px;width:16px;height:16px"><svg width="16" height="16" class="abs" style="left:0;top:0"><path d="M4 6H11L7.5 9.5Z" fill="#000"/></svg></div>
 <div class="btn3d" style="left:1012px;top:203px;width:16px;height:132px"></div>
 <!-- horizontal scrollbar -->
 <div class="abs track" style="left:6px;top:716px;width:1006px;height:16px"></div>
 <div class="btn3d" style="left:6px;top:716px;width:16px;height:16px"><svg width="16" height="16" class="abs" style="left:0;top:0"><path d="M9.5 4V11L6 7.5Z" fill="#000"/></svg></div>
 <div class="btn3d" style="left:996px;top:716px;width:16px;height:16px"><svg width="16" height="16" class="abs" style="left:0;top:0"><path d="M6 4V11L9.5 7.5Z" fill="#000"/></svg></div>
 <div class="btn3d" style="left:334px;top:716px;width:193px;height:16px"></div>
 <!-- size grip -->
 <div class="abs" style="left:1012px;top:716px;width:16px;height:16px;background:#d4d0c8"><svg width="16" height="16" class="abs" style="left:0;top:0"><path d="M4 16L16 4M8 16L16 8M12 16L16 12" stroke="#fff" stroke-width="1.4" fill="none"/><path d="M5 16L16 5M9 16L16 9M13 16L16 13" stroke="#808080" stroke-width="1.6" fill="none"/></svg></div>
 <!-- popup panel -->
 <div id="panel" class="abs">
  <div id="phead" class="abs"><span style="padding-left:1px">航海選択</span></div>
  <div class="pb" style="top:22px"><span>作戦航海</span></div>
  <div class="pb" style="top:47px;background:#f0e060"><span style="letter-spacing:0.4px;margin-right:-0.4px;left:1px">航路航海(新規)</span></div>
  <div class="pb" style="top:72px"><span style="letter-spacing:0.4px;margin-right:-0.4px;left:1px">航路航海(既存)</span></div>
  <div class="pb" style="top:97px"><span>経路航海</span></div>
  <div class="pb" style="top:122px"><span>出港中止</span></div>
 </div>
</div>
</body>
</html>
